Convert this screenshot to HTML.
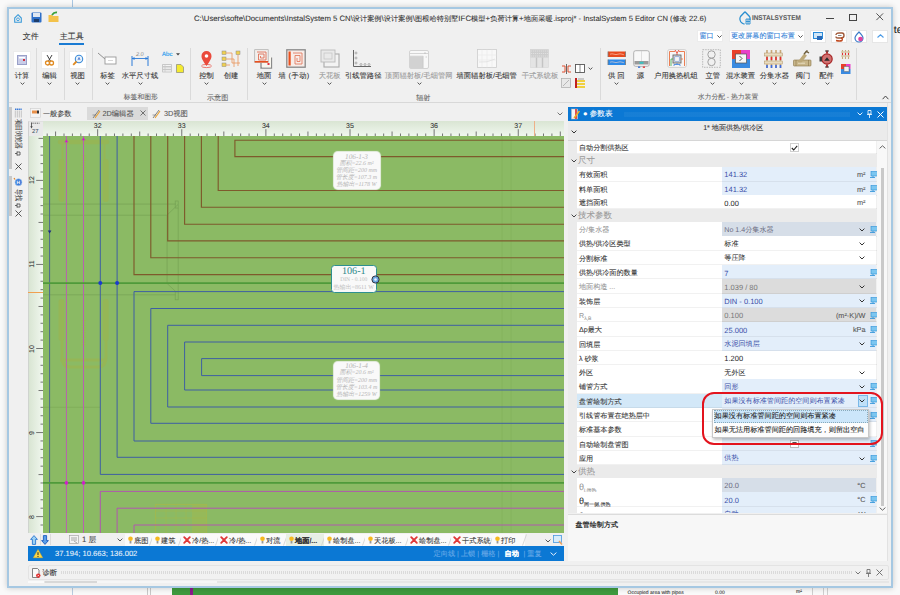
<!DOCTYPE html><html><head><meta charset="utf-8"><style>
*{box-sizing:border-box}
body{margin:0;text-rendering:geometricPrecision;width:900px;height:595px;overflow:hidden;position:relative;background:#f9f9f9;font-family:"Liberation Sans", sans-serif;color:#222}
.a{position:absolute}
.t{position:absolute;white-space:nowrap;line-height:1;-webkit-text-stroke:0.08px currentColor}
svg{position:absolute;overflow:visible}
</style></head><body>
<div class="a" style="left:72px;top:0px;width:1px;height:8px;background:#a9c7e3"></div>
<div class="t" style="left:893.8px;top:25.3px;font-size:10.5px;color:#222;">te</div>
<div class="a" style="left:72px;top:586px;width:1px;height:9px;background:#b9cce0"></div>
<div class="a" style="left:147px;top:586px;width:1px;height:9px;background:#c8c8c8"></div>
<div class="a" style="left:150px;top:586px;width:1px;height:9px;background:#c8c8c8"></div>
<div class="a" style="left:172px;top:587px;width:446px;height:8px;background:#3e9a3e"></div>
<div class="a" style="left:190px;top:587px;width:3px;height:8px;background:#8a1a8a"></div>
<div class="a" style="left:618px;top:587px;width:194px;height:8px;background:#fafafa"></div>
<div class="t" style="left:627.5px;top:591px;font-size:5px;color:#333;">Occupied area with pipes</div>
<div class="t" style="left:715px;top:591px;font-size:5px;color:#333;">0.00</div>
<div class="t" style="left:796px;top:590px;font-size:5px;color:#333;">m²</div>
<div class="a" style="left:812px;top:586px;width:1px;height:9px;background:#cfcfcf"></div>
<div class="a" style="left:823px;top:586px;width:1px;height:9px;background:#cfcfcf"></div>
<div class="a" style="left:827px;top:586px;width:1px;height:9px;background:#cfcfcf"></div>
<div class="a" style="left:7px;top:7px;width:886px;height:581px;background:#f0f0f0;border:2px solid #a6c8e2;box-shadow:0 0 6px rgba(0,0,0,0.2)"></div>
<svg style="left:14px;top:13.5px" width="8" height="9" viewBox="0 0 8 9">
<path d="M4 0.7 L7.3 4 V8.3 H0.7 V4 Z" fill="none" stroke="#3a9ad9" stroke-width="1.1"/>
<circle cx="4" cy="5.3" r="1.4" fill="none" stroke="#3a9ad9" stroke-width="0.9"/></svg>
<svg style="left:31px;top:12px" width="11" height="11" viewBox="0 0 11 11">
<rect x="0.5" y="0.5" width="10" height="10" rx="1" fill="#2e6fc8"/>
<rect x="2" y="1" width="7" height="4" fill="#dfe7f2"/><rect x="3" y="7" width="5" height="3" fill="#1d3d6a"/></svg>
<svg style="left:48px;top:11px" width="11" height="12" viewBox="0 0 11 12">
<path d="M0.5 4 L4 4 L5 5 L10.5 5 L10.5 11 L0.5 11 Z" fill="#f3c24a"/>
<path d="M4 4 Q6 1 9 1.5" stroke="#3aa03a" stroke-width="1.8" fill="none"/></svg>
<div class="t" style="left:193.9px;top:15px;font-size:7.75px;color:#333;">C:\Users\softe\Documents\InstalSystem 5 CN\</div>
<div class="t" style="left:352.7px;top:15px;font-size:7.75px;color:#333;letter-spacing:0.085px"><span style="font-size:7.15px">设计案例</span>\<span style="font-size:7.15px">设计案例</span>\<span style="font-size:7.15px">图根哈特别墅</span>IFC<span style="font-size:7.15px">模型</span>+<span style="font-size:7.15px">负荷计算</span>+<span style="font-size:7.15px">地面采暖</span></div>
<div class="t" style="left:553.2px;top:15px;font-size:7.6px;color:#333;">.isproj* - InstalSystem 5 Editor CN (<span style="font-size:7.15px">修改</span> 22.6)</div>
<svg style="left:739px;top:11px" width="12" height="14" viewBox="0 0 12 14">
<path d="M6 0.8 L10.5 5.5 C11.2 6.5 11.2 8 11 9 M6 0.8 L1.5 5.5 C0.5 7 0.6 10.5 3 12 C4 12.8 5 13 5.5 13" fill="none" stroke="#2a8fd0" stroke-width="1.3"/>
<path d="M7 8 H11 V13 H7 Z M9 8 V13 M7 10.5 H11" fill="none" stroke="#2a8fd0" stroke-width="0.9"/></svg>
<div class="t" style="left:752.3px;top:15.2px;font-size:7.0px;color:#5a5a5a;font-weight:bold;transform-origin:0 0;transform:scaleX(0.91)">INSTALSYSTEM</div>
<div class="a" style="left:826px;top:17.5px;width:7.5px;height:1px;background:#444"></div>
<div class="a" style="left:849px;top:13.5px;width:7.5px;height:7.5px;border:1px solid #444"></div>
<svg style="left:875.5px;top:13px" width="7.5" height="7.5" viewBox="0 0 7.5 7.5"><path d="M0.4 0.4 L7.1 7.1 M7.1 0.4 L0.4 7.1" stroke="#444" stroke-width="0.9"/></svg>
<div class="t" style="left:22.7px;top:32.8px;font-size:8.0px;color:#333;">文件</div>
<div class="t" style="left:59.8px;top:33px;font-size:8.0px;color:#333;">主工具</div>
<div class="a" style="left:59px;top:43px;width:25px;height:2.4px;background:#1a7bd3"></div>
<div class="a" style="left:697px;top:29.8px;width:26.2px;height:12.4px;background:#fff;border:1px solid #ececec"></div>
<div class="t" style="left:699.5px;top:32.8px;font-size:7.1px;color:#2f7ed6;">窗口</div>
<svg style="left:716.5px;top:35.3px" width="5" height="3" viewBox="0 0 5 3"><path d="M0.4 0.4 L2.5 2.5 L4.6 0.4" stroke="#555" fill="none" stroke-width="1"/></svg>
<div class="a" style="left:728.5px;top:29.8px;width:76.7px;height:12.4px;background:#fff;border:1px solid #ececec"></div>
<div class="t" style="left:731px;top:32.8px;font-size:7.1px;color:#2f7ed6;">更改屏幕的窗口布置</div>
<svg style="left:798px;top:35.3px" width="5" height="3" viewBox="0 0 5 3"><path d="M0.4 0.4 L2.5 2.5 L4.6 0.4" stroke="#555" fill="none" stroke-width="1"/></svg>
<div class="a" style="left:810px;top:30px;width:16px;height:12.5px;background:#fff;border:1px solid #e6e6e6"></div>
<div class="a" style="left:831px;top:30px;width:16px;height:12.5px;background:#fff;border:1px solid #e6e6e6"></div>
<div class="a" style="left:851px;top:30px;width:16px;height:12.5px;background:#fff;border:1px solid #e6e6e6"></div>
<div class="a" style="left:872px;top:30px;width:16px;height:12.5px;background:#fff;border:1px solid #e6e6e6"></div>
<svg style="left:813px;top:32px" width="10" height="9" viewBox="0 0 10 9"><rect x="0.5" y="0.5" width="9" height="6" fill="#cfe6f8" stroke="#2a8ad8"/><rect x="4" y="4" width="5" height="4" fill="#2a6ab8"/></svg>
<svg style="left:833.5px;top:31.5px" width="11" height="10" viewBox="0 0 11 10"><path d="M2 3 Q2 1 5 1 H8 Q10 1 10 3.5 Q10 6 7 6 H4 Q2 6 2 4.5" stroke="#a05a3a" stroke-width="1.4" fill="none"/><path d="M4 3.5 H7.5" stroke="#888" stroke-width="1"/><path d="M7 6 Q9 6.5 8 8.5 Q6 9.5 2 8.5" stroke="#c04a20" stroke-width="1.4" fill="none"/></svg>
<svg style="left:854px;top:31px" width="10" height="11" viewBox="0 0 10 11"><path d="M5 1 C3 3 1 5 1 7 A4 4 0 0 0 9 7 C9 5 7 3 5 1 Z" fill="none" stroke="#3a7ac8" stroke-width="1.2"/><circle cx="6.5" cy="8" r="2.3" fill="#e040a0"/></svg>
<svg style="left:876.5px;top:34px" width="7" height="4" viewBox="0 0 7 4"><path d="M0.5 3.5 L3.5 0.8 L6.5 3.5" stroke="#4a9ae6" fill="none" stroke-width="1.1"/></svg>
<div class="a" style="left:35.6px;top:48px;width:1px;height:52px;background:#dadada"></div>
<div class="a" style="left:63.6px;top:48px;width:1px;height:52px;background:#dadada"></div>
<div class="a" style="left:91.6px;top:48px;width:1px;height:52px;background:#dadada"></div>
<div class="a" style="left:190.4px;top:48px;width:1px;height:52px;background:#dadada"></div>
<div class="a" style="left:247.3px;top:48px;width:1px;height:52px;background:#dadada"></div>
<div class="a" style="left:600px;top:48px;width:1px;height:52px;background:#dadada"></div>
<div class="a" style="left:856.4px;top:48px;width:1px;height:52px;background:#dadada"></div>
<div class="a" style="left:9px;top:102px;width:882px;height:1px;background:#d8d8d8"></div>
<div class="a" style="left:13px;top:51px;width:18px;height:17.5px;background:#fff;border:1px solid #ececec"></div>
<div class="t" style="left:-38px;width:120px;text-align:center;top:72px;font-size:7.3px;color:#333">计算</div>
<svg style="left:19.5px;top:82.0px" width="5" height="3" viewBox="0 0 5 3"><path d="M0.6 0.6 L2.5 2.4 L4.4 0.6" stroke="#444" fill="none" stroke-width="0.9"/></svg>
<div class="a" style="left:41px;top:51px;width:18px;height:17.5px;background:#fff;border:1px solid #ececec"></div>
<div class="t" style="left:-10.5px;width:120px;text-align:center;top:72px;font-size:7.3px;color:#333">编辑</div>
<svg style="left:47.0px;top:82.0px" width="5" height="3" viewBox="0 0 5 3"><path d="M0.6 0.6 L2.5 2.4 L4.4 0.6" stroke="#444" fill="none" stroke-width="0.9"/></svg>
<div class="a" style="left:69px;top:51px;width:18px;height:17.5px;background:#fff;border:1px solid #ececec"></div>
<div class="t" style="left:17.5px;width:120px;text-align:center;top:72px;font-size:7.3px;color:#333">视图</div>
<svg style="left:75.0px;top:82.0px" width="5" height="3" viewBox="0 0 5 3"><path d="M0.6 0.6 L2.5 2.4 L4.4 0.6" stroke="#444" fill="none" stroke-width="0.9"/></svg>
<svg style="left:17px;top:55px" width="10" height="10" viewBox="0 0 10 10"><rect x="0.5" y="0.5" width="9" height="9" fill="#c9cde8" stroke="#9aa0c8"/><rect x="2" y="2" width="6" height="1.5" fill="#fff"/><rect x="6" y="4" width="2" height="2" fill="#d03040"/></svg>
<svg style="left:44px;top:54px" width="11" height="12" viewBox="0 0 11 12"><path d="M3 1 L6.5 7 M8 1 L4.5 7" stroke="#444" stroke-width="1"/><circle cx="3.5" cy="9" r="2" fill="none" stroke="#e08a20" stroke-width="1.3"/><circle cx="7.5" cy="9" r="2" fill="none" stroke="#e08a20" stroke-width="1.3"/></svg>
<svg style="left:72px;top:54px" width="12" height="12" viewBox="0 0 12 12"><circle cx="7" cy="5" r="3.7" fill="#e8f2fb" stroke="#3a8ad8" stroke-width="1.1"/><path d="M4.5 7.5 L1.2 10.8" stroke="#e08a20" stroke-width="1.8"/><path d="M6 6 L7 3.5 L8 6" stroke="#3a6ac8" fill="none" stroke-width="0.8"/></svg>
<svg style="left:97px;top:52px" width="20" height="14" viewBox="0 0 20 14"><path d="M1 1 L8 7" stroke="#777" stroke-width="0.8"/><rect x="8" y="5" width="11" height="7" fill="#fff" stroke="#999" stroke-width="0.9"/><path d="M11 8.5 L16 8.5" stroke="#bbb" stroke-width="0.6"/></svg>
<div class="t" style="left:47.599999999999994px;width:120px;text-align:center;top:72px;font-size:7.3px;color:#333">标签</div>
<svg style="left:105.1px;top:82.0px" width="5" height="3" viewBox="0 0 5 3"><path d="M0.6 0.6 L2.5 2.4 L4.4 0.6" stroke="#444" fill="none" stroke-width="0.9"/></svg>
<svg style="left:130px;top:50px" width="20" height="17" viewBox="0 0 20 17"><text x="6" y="5.5" font-size="5.5" font-style="italic" fill="#888" font-family="Liberation Sans">2.0</text><path d="M2 6 L2 16 M18 6 L18 16" stroke="#2a7ad8" stroke-width="1"/><path d="M2 8.5 L18 8.5" stroke="#2a7ad8" stroke-width="0.9"/><path d="M2 8.5 L4.5 7 L4.5 10 Z M18 8.5 L15.5 7 L15.5 10 Z" fill="#2a7ad8"/></svg>
<div class="t" style="left:80px;width:120px;text-align:center;top:72px;font-size:7.3px;color:#333">水平尺寸线</div>
<svg style="left:137.5px;top:82.0px" width="5" height="3" viewBox="0 0 5 3"><path d="M0.6 0.6 L2.5 2.4 L4.4 0.6" stroke="#444" fill="none" stroke-width="0.9"/></svg>
<div class="t" style="left:161.8px;top:52px;font-size:6.2px;color:#48a8ee;font-weight:bold;letter-spacing:-0.4px;-webkit-text-stroke:0">Abc</div>
<svg style="left:175.8px;top:53px" width="4" height="3" viewBox="0 0 4 3"><path d="M0 0.3 H4 L2 2.6 Z" fill="#444"/></svg>
<svg style="left:161.5px;top:64px" width="10" height="8.5" viewBox="0 0 10 8.5"><rect x="0" y="0" width="10" height="8.5" rx="0.8" fill="#c8c8c8"/><path d="M1 1.5 H9 M1 4.2 H9 M1 6.9 H9" stroke="#f4f4f4" stroke-width="1.2"/><path d="M3 1 V8" stroke="#c8c8c8" stroke-width="0.7"/></svg>
<svg style="left:175.5px;top:63.5px" width="8" height="9" viewBox="0 0 8 9"><path d="M0.5 0.5 H5 L7.5 3 V8.5 H0.5 Z" fill="#f4ea30" stroke="#777" stroke-width="0.6"/></svg>
<div class="t" style="left:123.8px;top:95px;font-size:6.8px;color:#666;">标签和图形</div>
<svg style="left:200px;top:50px" width="13" height="18" viewBox="0 0 13 18"><ellipse cx="6.5" cy="16" rx="5" ry="1.6" fill="none" stroke="#e85a50" stroke-width="0.8"/><path d="M6.5 16 C3 11 1.5 8.5 1.5 6 A5 5 0 0 1 11.5 6 C11.5 8.5 10 11 6.5 16 Z" fill="#ea4a3c"/><circle cx="6.5" cy="6" r="1.8" fill="#fff"/></svg>
<div class="t" style="left:146.5px;width:120px;text-align:center;top:72px;font-size:7.3px;color:#333">控制</div>
<svg style="left:204.0px;top:82.0px" width="5" height="3" viewBox="0 0 5 3"><path d="M0.6 0.6 L2.5 2.4 L4.4 0.6" stroke="#444" fill="none" stroke-width="0.9"/></svg>
<svg style="left:221px;top:50px" width="20" height="18" viewBox="0 0 20 18"><rect x="1" y="1" width="4" height="3.5" fill="#f0d050" stroke="#888" stroke-width="0.5"/><rect x="1" y="7" width="4" height="3.5" fill="#f0d050" stroke="#888" stroke-width="0.5"/><rect x="1" y="13" width="4" height="3.5" fill="#f0d050" stroke="#888" stroke-width="0.5"/><rect x="15" y="1" width="4" height="3.5" fill="#f0d050" stroke="#888" stroke-width="0.5"/><path d="M5 3 H11 V13 M5 9 H13 V17 M5 15 H9 M17 4.5 V16 M11 13 H19" stroke="#e8945a" stroke-width="0.8" fill="none"/></svg>
<div class="t" style="left:171px;width:120px;text-align:center;top:72px;font-size:7.3px;color:#333">创建</div>
<div class="t" style="left:207px;top:95px;font-size:7.1px;color:#666;">示意图</div>
<svg style="left:254px;top:48.5px" width="20" height="20" viewBox="0 0 20 20"><path d="M7 6 H11.5 V8 M17.5 8.5 V19 H7 V14" stroke="#8a8a8a" stroke-width="1.3" fill="none"/><rect x="8" y="8" width="9" height="10.5" fill="#f8f6ee"/><rect x="13.5" y="14" width="2" height="2" fill="#e03040"/><rect x="0.7" y="0.7" width="13.5" height="12.5" fill="#f3efec" stroke="#aaa" stroke-width="0.7"/><path d="M3 3 H12 V11 H4.5 V5 H10 V9 H6.5 V7" stroke="#e07058" stroke-width="0.9" fill="none"/><rect x="0.7" y="12" width="13.5" height="1.6" fill="#e8501e"/></svg>
<div class="t" style="left:204px;width:120px;text-align:center;top:72px;font-size:7.3px;color:#333">地面</div>
<svg style="left:261.5px;top:82.0px" width="5" height="3" viewBox="0 0 5 3"><path d="M0.6 0.6 L2.5 2.4 L4.4 0.6" stroke="#444" fill="none" stroke-width="0.9"/></svg>
<svg style="left:286px;top:49px" width="20" height="19" viewBox="0 0 20 19"><rect x="0.8" y="0.8" width="18.4" height="17.4" fill="#f7ece8" stroke="#888" stroke-width="1.3"/><rect x="2.5" y="2.5" width="2.2" height="14" fill="#e8501e"/><path d="M7 4 H16 V15 H9 V6.5 H14 V12.5 H11 V9" stroke="#e07050" stroke-width="0.8" fill="none"/></svg>
<div class="t" style="left:278.5px;top:72px;font-size:7.3px;color:#333;letter-spacing:0.4px">墙 (手动)</div>
<svg style="left:319.5px;top:49px" width="20" height="19" viewBox="0 0 20 19"><rect x="4" y="5" width="15" height="13" fill="#f3f3f3" stroke="#aaa" stroke-width="1.1"/><rect x="1" y="1" width="14" height="12" fill="#e9e9e9" stroke="#bbb" stroke-width="0.9"/><rect x="4" y="4" width="8" height="6" fill="none" stroke="#c3c3c3" stroke-width="0.7"/></svg>
<div class="t" style="left:269.7px;width:120px;text-align:center;top:72px;font-size:7.3px;color:#999">天花板</div>
<svg style="left:327.2px;top:82.0px" width="5" height="3" viewBox="0 0 5 3"><path d="M0.6 0.6 L2.5 2.4 L4.4 0.6" stroke="#444" fill="none" stroke-width="0.9"/></svg>
<svg style="left:352px;top:49px" width="20" height="19" viewBox="0 0 20 19"><path d="M1.5 1 V17.5 H19" stroke="#666" stroke-width="1" fill="none"/><circle cx="4" cy="4" r="1" fill="none" stroke="#888" stroke-width="0.6"/><circle cx="4" cy="9" r="1" fill="none" stroke="#888" stroke-width="0.6"/><circle cx="4" cy="14" r="1" fill="none" stroke="#888" stroke-width="0.6"/><circle cx="9" cy="15.5" r="1" fill="none" stroke="#888" stroke-width="0.6"/><circle cx="13" cy="15.5" r="1" fill="none" stroke="#888" stroke-width="0.6"/><circle cx="17" cy="15.5" r="1" fill="none" stroke="#888" stroke-width="0.6"/></svg>
<div class="t" style="left:303.2px;width:120px;text-align:center;top:72px;font-size:7.3px;color:#333">引线管路径</div>
<svg style="left:409px;top:49.5px" width="20" height="19" viewBox="0 0 20 19"><rect x="0.5" y="0.5" width="19" height="18" rx="1.5" fill="#f8f8f8" stroke="#cfcfcf" stroke-width="0.9"/><rect x="1" y="6.5" width="13" height="11.5" fill="#d2d2d2"/><path d="M1 6.2 H14.2 V18 M1 3.5 H19" stroke="#bdbdbd" stroke-width="0.6" fill="none"/><path d="M16 2 V4 M16.5 7 H18" stroke="#aaa" stroke-width="0.5"/></svg>
<div class="t" style="left:358.7px;width:120px;text-align:center;top:72px;font-size:7.3px;color:#999">顶面辐射板/毛细管网</div>
<svg style="left:416.5px;top:82.0px" width="5" height="3" viewBox="0 0 5 3"><path d="M0.6 0.6 L2.5 2.4 L4.4 0.6" stroke="#444" fill="none" stroke-width="0.9"/></svg>
<div class="t" style="left:416.2px;top:95px;font-size:7.1px;color:#666;">辐射</div>
<svg style="left:477px;top:49px" width="20" height="19" viewBox="0 0 20 19"><rect x="0.5" y="0.5" width="19" height="18" fill="#f8f8f8" stroke="#ccc" stroke-width="0.8"/><path d="M0.5 6 H19.5 M0.5 11 H19.5 M5 0.5 V18.5 M10 0.5 V18.5 M15 0.5 V18.5" stroke="#e6e6e6" stroke-width="0.5"/><path d="M2 13 Q10 14 18 10" stroke="#ddd" stroke-width="0.7" fill="none"/></svg>
<div class="t" style="left:426.7px;width:120px;text-align:center;top:72px;font-size:7.3px;color:#333">墙面辐射板/毛细管</div>
<svg style="left:530px;top:49px" width="19" height="19" viewBox="0 0 19 19"><rect x="0.5" y="0.5" width="18" height="18" fill="#e4e4e4" stroke="#d6d6d6" stroke-width="0.6"/><rect x="0.5" y="0.5" width="18" height="8" fill="#cdcdcd"/><path d="M1 2 H18 M1 4.5 H18 M1 7 H18" stroke="#e6e6e6" stroke-width="0.7" stroke-dasharray="1.2 0.8"/><path d="M6.5 8.5 V18.5 M12.5 8.5 V18.5" stroke="#c4c4c4" stroke-width="1.4"/></svg>
<div class="t" style="left:480px;width:120px;text-align:center;top:72px;font-size:7.3px;color:#999">干式系统板</div>
<svg style="left:561px;top:63.5px" width="11" height="10" viewBox="0 0 11 10"><path d="M5.5 0 V10" stroke="#444" stroke-width="0.8"/><path d="M1 2 H4 V8 H1 M10 2 H7 V8 H10" stroke="#e05030" stroke-width="1" fill="none"/></svg>
<svg style="left:574.5px;top:64px" width="10" height="9" viewBox="0 0 10 9"><rect x="0.5" y="0.5" width="9" height="8" fill="#fff" stroke="#555" stroke-width="0.9"/><path d="M5 0.5 V8.5" stroke="#555" stroke-width="0.7"/></svg>
<svg style="left:588.2px;top:66.8px" width="5" height="3" viewBox="0 0 5 3"><path d="M0.6 0.6 L2.5 2.4 L4.4 0.6" stroke="#444" fill="none" stroke-width="0.9"/></svg>
<svg style="left:561px;top:78px" width="10" height="10" viewBox="0 0 10 10"><rect x="0.5" y="0.5" width="9" height="9" fill="#e8e8e8" stroke="#aaa" stroke-width="0.7"/><path d="M2 8 L8 2" stroke="#aaa" stroke-width="0.8"/></svg>
<svg style="left:574.5px;top:77.5px" width="10" height="10" viewBox="0 0 10 10"><rect x="0" y="0" width="2" height="10" fill="#c02020"/><rect x="2" y="2" width="8" height="2" fill="#f0d040"/><rect x="2" y="5" width="8" height="2" fill="#f0d040"/><rect x="2" y="8" width="8" height="2" fill="#f0d040"/><path d="M3 1 H9" stroke="#555" stroke-width="0.5"/></svg>
<svg style="left:607.5px;top:51px" width="18" height="16" viewBox="0 0 18 16"><rect x="0" y="0.5" width="17.5" height="5.5" fill="#e84a1e"/><rect x="0" y="8.5" width="17.5" height="5.5" fill="#2e8ae8"/><path d="M2 3.2 Q4 2.4 6 3.2 T10 3.2 T14 3.2 T16 3.2 M2 11.2 Q4 10.4 6 11.2 T10 11.2 T14 11.2 T16 11.2" stroke="#ffd8c8" stroke-width="0.6" fill="none"/><path d="M0 0.5 V6 M17.5 0.5 V6 M0 8.5 V14 M17.5 8.5 V14" stroke="#777" stroke-width="0.8"/></svg>
<div class="t" style="left:608px;top:72px;font-size:7.3px;color:#333;">供 回</div>
<svg style="left:613.5px;top:82.0px" width="5" height="3" viewBox="0 0 5 3"><path d="M0.6 0.6 L2.5 2.4 L4.4 0.6" stroke="#444" fill="none" stroke-width="0.9"/></svg>
<svg style="left:632.5px;top:49.5px" width="17" height="18" viewBox="0 0 17 18"><rect x="0.7" y="0.7" width="15.6" height="15.6" rx="2" fill="#f8f8f8" stroke="#aaa" stroke-width="0.9"/><path d="M8.5 1 V11" stroke="#ccc" stroke-width="0.6"/><rect x="1.5" y="11" width="14" height="3.5" fill="#9a9a9a"/><rect x="6.5" y="11.8" width="4" height="2" fill="#3ac0c0"/><rect x="5" y="16.5" width="2.2" height="1.3" fill="#2a6ad8"/><rect x="9.8" y="16.5" width="2.2" height="1.3" fill="#e02a2a"/></svg>
<div class="t" style="left:580.5px;width:120px;text-align:center;top:72px;font-size:7.3px;color:#333">源</div>
<svg style="left:666.5px;top:49px" width="20" height="19" viewBox="0 0 20 19"><rect x="0.6" y="0.6" width="18.8" height="17.8" rx="2" fill="#f6f6f6" stroke="#c8c8c8" stroke-width="0.8"/><path d="M2.5 17 V2.5 H8 M17.5 17 V2.5 H12" stroke="#e8602a" stroke-width="0.8" fill="none"/><path d="M8 1 L10 4 L12 1 M10 4 V6" stroke="#e8402a" stroke-width="0.9" fill="none"/><rect x="6" y="6" width="8" height="8" fill="#d8d8d8" stroke="#666" stroke-width="0.9"/><rect x="7.8" y="7.8" width="4.4" height="4.4" fill="#f4f4f4" stroke="#5a8ad8" stroke-width="0.5"/><path d="M4 17 V10 H6" stroke="#38a848" stroke-width="0.8" fill="none"/><path d="M10 14 V15.5 M7 17 V15.5 H13 V17" stroke="#3a80e0" stroke-width="0.8" fill="none"/><path d="M14 10 H16" stroke="#e8602a" stroke-width="0.7"/></svg>
<div class="t" style="left:616px;width:120px;text-align:center;top:72px;font-size:7.3px;color:#333">户用换热机组</div>
<svg style="left:702px;top:49px" width="19" height="19" viewBox="0 0 19 19"><rect x="0.7" y="0.7" width="17.6" height="17.6" fill="none" stroke="#aaa" stroke-width="0.8" stroke-dasharray="1.5 1"/><circle cx="9.5" cy="5.5" r="3.7" fill="none" stroke="#999" stroke-width="0.9"/><circle cx="9.5" cy="13" r="3.7" fill="none" stroke="#999" stroke-width="0.9"/></svg>
<div class="t" style="left:652.7px;width:120px;text-align:center;top:72px;font-size:7.3px;color:#333">立管</div>
<svg style="left:710.0px;top:82.0px" width="5" height="3" viewBox="0 0 5 3"><path d="M0.6 0.6 L2.5 2.4 L4.4 0.6" stroke="#444" fill="none" stroke-width="0.9"/></svg>
<svg style="left:732px;top:49.5px" width="18" height="18" viewBox="0 0 18 18"><rect x="0" y="0" width="9" height="9" fill="#e8402a"/><rect x="9" y="0" width="9" height="9" fill="#e840c8"/><rect x="0" y="9" width="18" height="9" fill="#3a8ae0"/><rect x="3.5" y="4" width="11" height="9" fill="#f6f6f6" stroke="#555" stroke-width="0.7"/><path d="M7.5 6 L10 8.5 L7.5 11" stroke="#444" fill="none" stroke-width="0.9"/></svg>
<div class="t" style="left:680.5px;width:120px;text-align:center;top:72px;font-size:7.3px;color:#333">混水装置</div>
<svg style="left:738.5px;top:82.0px" width="5" height="3" viewBox="0 0 5 3"><path d="M0.6 0.6 L2.5 2.4 L4.4 0.6" stroke="#444" fill="none" stroke-width="0.9"/></svg>
<svg style="left:764px;top:49.5px" width="19" height="18" viewBox="0 0 19 18"><path d="M3 0 V18 M7.5 0 V18 M12 0 V18 M16.5 0 V18" stroke="#c8a878" stroke-width="1.6"/><rect x="0.5" y="3" width="18" height="3" fill="#e8dcc0" stroke="#b09060" stroke-width="0.5"/><rect x="0.5" y="11" width="18" height="3" fill="#e8dcc0" stroke="#b09060" stroke-width="0.5"/><path d="M3 7 V10 M7.5 7 V10 M12 7 V10 M16.5 7 V10" stroke="#e03030" stroke-width="1.6"/><path d="M3 15 V18 M7.5 15 V18 M12 15 V18 M16.5 15 V18" stroke="#3a6ae0" stroke-width="1.6"/></svg>
<div class="t" style="left:714.4px;width:120px;text-align:center;top:72px;font-size:7.3px;color:#333">分集水器</div>
<svg style="left:771.5px;top:82.0px" width="5" height="3" viewBox="0 0 5 3"><path d="M0.6 0.6 L2.5 2.4 L4.4 0.6" stroke="#444" fill="none" stroke-width="0.9"/></svg>
<div class="t" style="left:697.8px;top:95px;font-size:6.8px;color:#666;">水力分配 - 热力装置</div>
<svg style="left:793px;top:50px" width="19" height="17" viewBox="0 0 19 17"><rect x="0.5" y="10" width="17.5" height="6" rx="0.8" fill="#c8b68a" stroke="#8a7648" stroke-width="0.6"/><path d="M3 10 V16 M15.5 10 V16" stroke="#8a7648" stroke-width="0.6"/><path d="M6 13 L12.5 4.5" stroke="#bca878" stroke-width="3.6"/><path d="M5 13.2 H12" stroke="#f0e8d0" stroke-width="0.8"/><path d="M11 4 L13.5 1.5 L16 3 M12.5 2 L14.5 0.5" stroke="#6a5a38" stroke-width="1.4" fill="none"/></svg>
<div class="t" style="left:743px;width:120px;text-align:center;top:72px;font-size:7.3px;color:#333">阀门</div>
<svg style="left:800.5px;top:82.0px" width="5" height="3" viewBox="0 0 5 3"><path d="M0.6 0.6 L2.5 2.4 L4.4 0.6" stroke="#444" fill="none" stroke-width="0.9"/></svg>
<svg style="left:819px;top:50px" width="15" height="18" viewBox="0 0 15 18"><path d="M8 0.5 V3.5 M8 14.5 V17.5" stroke="#a82020" stroke-width="1.8"/><path d="M6 1 H10 M6 17 H10" stroke="#444" stroke-width="1"/><circle cx="8" cy="9" r="5.2" fill="#d07070" stroke="#a82828" stroke-width="1.2"/><path d="M0.5 6.5 H3 V11.5 H0.5 Z" fill="#3a3a3a"/><path d="M5.2 10.8 L8 7.2 L10.8 10.8 Z" fill="#2a2a2a"/></svg>
<div class="t" style="left:766.5px;width:120px;text-align:center;top:72px;font-size:7.3px;color:#333">配件</div>
<svg style="left:824.5px;top:82.0px" width="5" height="3" viewBox="0 0 5 3"><path d="M0.6 0.6 L2.5 2.4 L4.4 0.6" stroke="#444" fill="none" stroke-width="0.9"/></svg>
<svg style="left:840.5px;top:49.5px" width="9" height="9" viewBox="0 0 9 9"><path d="M1.5 0 V9 M4.5 0 V9 M7.5 0 V9" stroke="#c8a878" stroke-width="1.1"/><path d="M0 2 H9 M0 6 H9" stroke="#d8c8a8" stroke-width="1.4"/><path d="M1.5 3 V5 M4.5 3 V5 M7.5 3 V5" stroke="#e03030" stroke-width="1.1"/></svg>
<svg style="left:840.5px;top:63.5px" width="9.5" height="10" viewBox="0 0 9.5 10"><rect x="0" y="0" width="5" height="5" fill="#e8402a"/><rect x="5" y="0" width="4.5" height="5" fill="#e840c8"/><rect x="0" y="5" width="9.5" height="5" fill="#3a8ae0"/><rect x="3" y="2.5" width="5" height="5" fill="#f3f3f3" stroke="#666" stroke-width="0.5"/></svg>
<svg style="left:881.5px;top:95px" width="7" height="5" viewBox="0 0 7 5"><path d="M0.6 4.2 L3.5 1 L6.4 4.2" stroke="#444" fill="none" stroke-width="1"/></svg>
<div class="a" style="left:9px;top:103px;width:18px;height:457px;background:#f0f0f0"></div>
<div class="a" style="left:9px;top:106.5px;width:2.5px;height:62.5px;background:#c8c8c8"></div>
<div class="a" style="left:9px;top:175.5px;width:2.5px;height:40.5px;background:#c8c8c8"></div>
<svg style="left:13.5px;top:107.5px" width="9" height="10" viewBox="0 0 9 10"><path d="M1 1.2 H8" stroke="#3a7ad8" stroke-width="1.4" stroke-dasharray="1.3 0.5"/><path d="M1.3 2.5 V9.5 M3.3 2.5 V9.5 M5.3 2.5 V9.5 M7.3 2.5 V9.5" stroke="#999" stroke-width="0.5"/></svg>
<div class="t" style="left:22.3px;top:119px;font-size:7.8px;color:#444;transform-origin:0 0;transform:rotate(90deg) scaleX(0.76)">项目浏览器</div>
<svg style="left:14.5px;top:151px" width="6" height="5" viewBox="0 0 6 5"><path d="M0 2.5 H2 M2 0.5 V4.5 M2 1 H5 V4 H2" stroke="#444" stroke-width="0.8" fill="none"/></svg>
<svg style="left:14.5px;top:162.5px" width="7" height="7" viewBox="0 0 7 7"><path d="M0.5 0.5 L6.5 6.5 M6.5 0.5 L0.5 6.5" stroke="#444" stroke-width="0.9"/></svg>
<svg style="left:13.8px;top:177.5px" width="9" height="8" viewBox="0 0 9 8"><circle cx="4.5" cy="4.2" r="3.5" fill="#3a7ad8" stroke="#a8c8f0" stroke-width="0.6"/><path d="M1 1.5 L0 0" stroke="#e08020" stroke-width="1.2"/><text x="2.6" y="6.2" font-size="4.8" fill="#fff" font-family="Liberation Sans" font-weight="bold">H</text></svg>
<div class="t" style="left:22.3px;top:188.7px;font-size:7.8px;color:#444;transform-origin:0 0;transform:rotate(90deg) scaleX(0.78)">导找</div>
<svg style="left:14.5px;top:202.8px" width="6" height="5" viewBox="0 0 6 5"><path d="M0 2.5 H2 M2 0.5 V4.5 M2 1 H5 V4 H2" stroke="#444" stroke-width="0.8" fill="none"/></svg>
<svg style="left:14.5px;top:209.5px" width="7" height="7" viewBox="0 0 7 7"><path d="M0.5 0.5 L6.5 6.5 M6.5 0.5 L0.5 6.5" stroke="#444" stroke-width="0.9"/></svg>
<svg style="left:30px;top:108px" width="11" height="10" viewBox="0 0 11 10"><rect x="0.5" y="0.5" width="10" height="9" fill="#f4f4f4" stroke="#ccc" stroke-width="0.6"/><path d="M2 4 H7" stroke="#e8904a" stroke-width="3"/><rect x="7" y="2.5" width="2" height="3" fill="#333"/></svg>
<div class="t" style="left:43px;top:110.5px;font-size:7.1px;color:#444;">一般参数</div>
<div class="a" style="left:86.8px;top:107px;width:61.6px;height:13px;background:#dadada"></div>
<svg style="left:91.5px;top:108.5px" width="9" height="10" viewBox="0 0 9 10"><path d="M1 9 L7 1" stroke="#777" stroke-width="0.9"/><path d="M3 9 L8 2" stroke="#e8a030" stroke-width="1.1"/><path d="M0.5 6 H4" stroke="#555" stroke-width="0.5"/></svg>
<div class="t" style="left:102.5px;top:110.3px;font-size:7.3px;color:#555;">2D编辑器</div>
<svg style="left:140px;top:110px" width="6" height="6" viewBox="0 0 6 6"><path d="M0.5 0.5 L5.5 5.5 M5.5 0.5 L0.5 5.5" stroke="#555" stroke-width="0.8"/></svg>
<svg style="left:152px;top:108.5px" width="9" height="10" viewBox="0 0 9 10"><path d="M1 9 L7 1" stroke="#777" stroke-width="0.9"/><path d="M3 9 L8 2" stroke="#e8a030" stroke-width="1.1"/><path d="M0.5 6 H4" stroke="#555" stroke-width="0.5"/></svg>
<div class="t" style="left:164px;top:110.3px;font-size:7.3px;color:#555;">3D视图</div>
<svg style="left:556.5px;top:111.5px" width="6" height="4" viewBox="0 0 6 4"><path d="M0.6 0.6 L3 3 L5.4 0.6" stroke="#666" fill="none" stroke-width="0.9"/></svg>
<div class="a" style="left:27.5px;top:120.5px;width:15.5px;height:15.5px;background:#e9e9e9;border-left:1px solid #d0d0d0;border-top:1px solid #e0e0e0"></div>
<svg style="left:30px;top:122px" width="10" height="7" viewBox="0 0 10 7"><path d="M1.5 1.2 H9.5" stroke="#444" stroke-width="0.8" stroke-dasharray="1.1 0.7"/><path d="M1.5 0.5 V5" stroke="#444" stroke-width="0.8"/><path d="M0.3 4.2 L1.5 6.5 L2.7 4.2 Z" fill="#444"/></svg>
<div class="t" style="left:32px;top:129.5px;font-size:5.8px;color:#456;">27</div>
<div class="a" style="left:43px;top:120.5px;width:521px;height:15.5px;background:linear-gradient(#d9e5d3,#f0f7ee)"></div>
<div class="a" style="left:27.5px;top:136px;width:15.5px;height:397px;background:linear-gradient(90deg,#d9e5d3,#f0f7ee);border-left:1px solid #cfd4cf"></div>
<svg style="left:0;top:0" width="900" height="595"><path d="M47.18 133.5 V136" stroke="#555" stroke-width="0.8"/><path d="M55.59 131.5 V136" stroke="#555" stroke-width="0.8"/><path d="M64.00 133.5 V136" stroke="#555" stroke-width="0.8"/><path d="M72.41 133.5 V136" stroke="#555" stroke-width="0.8"/><path d="M80.83 133.5 V136" stroke="#555" stroke-width="0.8"/><path d="M89.24 133.5 V136" stroke="#555" stroke-width="0.8"/><path d="M97.65 129.2 V136" stroke="#555" stroke-width="0.8"/><path d="M106.06 133.5 V136" stroke="#555" stroke-width="0.8"/><path d="M114.47 133.5 V136" stroke="#555" stroke-width="0.8"/><path d="M122.89 133.5 V136" stroke="#555" stroke-width="0.8"/><path d="M131.30 133.5 V136" stroke="#555" stroke-width="0.8"/><path d="M139.71 131.5 V136" stroke="#555" stroke-width="0.8"/><path d="M148.12 133.5 V136" stroke="#555" stroke-width="0.8"/><path d="M156.53 133.5 V136" stroke="#555" stroke-width="0.8"/><path d="M164.95 133.5 V136" stroke="#555" stroke-width="0.8"/><path d="M173.36 133.5 V136" stroke="#555" stroke-width="0.8"/><path d="M181.77 129.2 V136" stroke="#555" stroke-width="0.8"/><path d="M190.18 133.5 V136" stroke="#555" stroke-width="0.8"/><path d="M198.59 133.5 V136" stroke="#555" stroke-width="0.8"/><path d="M207.01 133.5 V136" stroke="#555" stroke-width="0.8"/><path d="M215.42 133.5 V136" stroke="#555" stroke-width="0.8"/><path d="M223.83 131.5 V136" stroke="#555" stroke-width="0.8"/><path d="M232.24 133.5 V136" stroke="#555" stroke-width="0.8"/><path d="M240.65 133.5 V136" stroke="#555" stroke-width="0.8"/><path d="M249.07 133.5 V136" stroke="#555" stroke-width="0.8"/><path d="M257.48 133.5 V136" stroke="#555" stroke-width="0.8"/><path d="M265.89 129.2 V136" stroke="#555" stroke-width="0.8"/><path d="M274.30 133.5 V136" stroke="#555" stroke-width="0.8"/><path d="M282.71 133.5 V136" stroke="#555" stroke-width="0.8"/><path d="M291.13 133.5 V136" stroke="#555" stroke-width="0.8"/><path d="M299.54 133.5 V136" stroke="#555" stroke-width="0.8"/><path d="M307.95 131.5 V136" stroke="#555" stroke-width="0.8"/><path d="M316.36 133.5 V136" stroke="#555" stroke-width="0.8"/><path d="M324.77 133.5 V136" stroke="#555" stroke-width="0.8"/><path d="M333.19 133.5 V136" stroke="#555" stroke-width="0.8"/><path d="M341.60 133.5 V136" stroke="#555" stroke-width="0.8"/><path d="M350.01 129.2 V136" stroke="#555" stroke-width="0.8"/><path d="M358.42 133.5 V136" stroke="#555" stroke-width="0.8"/><path d="M366.83 133.5 V136" stroke="#555" stroke-width="0.8"/><path d="M375.25 133.5 V136" stroke="#555" stroke-width="0.8"/><path d="M383.66 133.5 V136" stroke="#555" stroke-width="0.8"/><path d="M392.07 131.5 V136" stroke="#555" stroke-width="0.8"/><path d="M400.48 133.5 V136" stroke="#555" stroke-width="0.8"/><path d="M408.89 133.5 V136" stroke="#555" stroke-width="0.8"/><path d="M417.31 133.5 V136" stroke="#555" stroke-width="0.8"/><path d="M425.72 133.5 V136" stroke="#555" stroke-width="0.8"/><path d="M434.13 129.2 V136" stroke="#555" stroke-width="0.8"/><path d="M442.54 133.5 V136" stroke="#555" stroke-width="0.8"/><path d="M450.95 133.5 V136" stroke="#555" stroke-width="0.8"/><path d="M459.37 133.5 V136" stroke="#555" stroke-width="0.8"/><path d="M467.78 133.5 V136" stroke="#555" stroke-width="0.8"/><path d="M476.19 131.5 V136" stroke="#555" stroke-width="0.8"/><path d="M484.60 133.5 V136" stroke="#555" stroke-width="0.8"/><path d="M493.01 133.5 V136" stroke="#555" stroke-width="0.8"/><path d="M501.43 133.5 V136" stroke="#555" stroke-width="0.8"/><path d="M509.84 133.5 V136" stroke="#555" stroke-width="0.8"/><path d="M518.25 129.2 V136" stroke="#555" stroke-width="0.8"/><path d="M526.66 133.5 V136" stroke="#555" stroke-width="0.8"/><path d="M535.07 133.5 V136" stroke="#555" stroke-width="0.8"/><path d="M543.49 133.5 V136" stroke="#555" stroke-width="0.8"/><path d="M551.90 133.5 V136" stroke="#555" stroke-width="0.8"/><path d="M560.31 131.5 V136" stroke="#555" stroke-width="0.8"/><path d="M38.5 138.38 H43" stroke="#555" stroke-width="0.8"/><path d="M40.5 146.78 H43" stroke="#555" stroke-width="0.8"/><path d="M40.5 155.19 H43" stroke="#555" stroke-width="0.8"/><path d="M40.5 163.59 H43" stroke="#555" stroke-width="0.8"/><path d="M40.5 172.00 H43" stroke="#555" stroke-width="0.8"/><path d="M36.2 180.40 H43" stroke="#555" stroke-width="0.8"/><path d="M40.5 188.81 H43" stroke="#555" stroke-width="0.8"/><path d="M40.5 197.21 H43" stroke="#555" stroke-width="0.8"/><path d="M40.5 205.62 H43" stroke="#555" stroke-width="0.8"/><path d="M40.5 214.02 H43" stroke="#555" stroke-width="0.8"/><path d="M38.5 222.43 H43" stroke="#555" stroke-width="0.8"/><path d="M40.5 230.83 H43" stroke="#555" stroke-width="0.8"/><path d="M40.5 239.24 H43" stroke="#555" stroke-width="0.8"/><path d="M40.5 247.64 H43" stroke="#555" stroke-width="0.8"/><path d="M40.5 256.05 H43" stroke="#555" stroke-width="0.8"/><path d="M36.2 264.45 H43" stroke="#555" stroke-width="0.8"/><path d="M40.5 272.86 H43" stroke="#555" stroke-width="0.8"/><path d="M40.5 281.26 H43" stroke="#555" stroke-width="0.8"/><path d="M40.5 289.66 H43" stroke="#555" stroke-width="0.8"/><path d="M40.5 298.07 H43" stroke="#555" stroke-width="0.8"/><path d="M38.5 306.48 H43" stroke="#555" stroke-width="0.8"/><path d="M40.5 314.88 H43" stroke="#555" stroke-width="0.8"/><path d="M40.5 323.28 H43" stroke="#555" stroke-width="0.8"/><path d="M40.5 331.69 H43" stroke="#555" stroke-width="0.8"/><path d="M40.5 340.10 H43" stroke="#555" stroke-width="0.8"/><path d="M36.2 348.50 H43" stroke="#555" stroke-width="0.8"/><path d="M40.5 356.90 H43" stroke="#555" stroke-width="0.8"/><path d="M40.5 365.31 H43" stroke="#555" stroke-width="0.8"/><path d="M40.5 373.72 H43" stroke="#555" stroke-width="0.8"/><path d="M40.5 382.12 H43" stroke="#555" stroke-width="0.8"/><path d="M38.5 390.52 H43" stroke="#555" stroke-width="0.8"/><path d="M40.5 398.93 H43" stroke="#555" stroke-width="0.8"/><path d="M40.5 407.34 H43" stroke="#555" stroke-width="0.8"/><path d="M40.5 415.74 H43" stroke="#555" stroke-width="0.8"/><path d="M40.5 424.14 H43" stroke="#555" stroke-width="0.8"/><path d="M36.2 432.55 H43" stroke="#555" stroke-width="0.8"/><path d="M40.5 440.95 H43" stroke="#555" stroke-width="0.8"/><path d="M40.5 449.36 H43" stroke="#555" stroke-width="0.8"/><path d="M40.5 457.76 H43" stroke="#555" stroke-width="0.8"/><path d="M40.5 466.17 H43" stroke="#555" stroke-width="0.8"/><path d="M38.5 474.58 H43" stroke="#555" stroke-width="0.8"/><path d="M40.5 482.98 H43" stroke="#555" stroke-width="0.8"/><path d="M40.5 491.38 H43" stroke="#555" stroke-width="0.8"/><path d="M40.5 499.79 H43" stroke="#555" stroke-width="0.8"/><path d="M40.5 508.19 H43" stroke="#555" stroke-width="0.8"/><path d="M36.2 516.60 H43" stroke="#555" stroke-width="0.8"/><path d="M40.5 525.00 H43" stroke="#555" stroke-width="0.8"/></svg>
<div class="t" style="left:87.65px;width:20px;text-align:center;top:122.8px;font-size:7px;color:#333">32</div>
<div class="t" style="left:171.77px;width:20px;text-align:center;top:122.8px;font-size:7px;color:#333">33</div>
<div class="t" style="left:255.89px;width:20px;text-align:center;top:122.8px;font-size:7px;color:#333">34</div>
<div class="t" style="left:340.01px;width:20px;text-align:center;top:122.8px;font-size:7px;color:#333">35</div>
<div class="t" style="left:424.13px;width:20px;text-align:center;top:122.8px;font-size:7px;color:#333">36</div>
<div class="t" style="left:508.25px;width:20px;text-align:center;top:122.8px;font-size:7px;color:#333">37</div>
<div class="t" style="left:29px;top:185.4px;width:10px;text-align:center;font-size:7px;color:#333;transform-origin:0 0;transform:rotate(-90deg)">12</div>
<div class="t" style="left:29px;top:269.45px;width:10px;text-align:center;font-size:7px;color:#333;transform-origin:0 0;transform:rotate(-90deg)">11</div>
<div class="t" style="left:29px;top:353.5px;width:10px;text-align:center;font-size:7px;color:#333;transform-origin:0 0;transform:rotate(-90deg)">10</div>
<div class="t" style="left:29px;top:437.54999999999995px;width:10px;text-align:center;font-size:7px;color:#333;transform-origin:0 0;transform:rotate(-90deg)">9</div>
<div class="t" style="left:29px;top:521.6px;width:10px;text-align:center;font-size:7px;color:#333;transform-origin:0 0;transform:rotate(-90deg)">8</div>
<div class="a" style="left:28px;top:292px;width:15px;height:1px;background:#f0a050"></div>
<div class="a" style="left:534.3px;top:121px;width:1px;height:15px;background:#eeb088"></div>
<svg style="left:0;top:0" width="900" height="595"><rect x="43" y="136" width="521" height="397" fill="#8bba64"/><path d="M60 142 H107" stroke="#95b656" stroke-width="4.5" stroke-linecap="round"/><path d="M62.5 142 V160 M104.5 142 V160" stroke="#95b656" stroke-width="2"/><rect x="58.5" y="159" width="6" height="43" rx="3" fill="#95b656"/><rect x="102.7" y="159" width="6" height="43" rx="3" fill="#95b656"/><path d="M83.7 155 V181" stroke="#95b656" stroke-width="4" stroke-dasharray="1.2 1.2"/><rect x="58.5" y="299" width="6" height="42" rx="3" fill="#95b656"/><rect x="102.7" y="299" width="6" height="42" rx="3" fill="#95b656"/><path d="M62 340 V356 Q62 367 70 367 H98 Q106 367 106 356 V340" stroke="#95b656" stroke-width="3" fill="none"/><path d="M60 360 H107" stroke="#95b656" stroke-width="3"/><path d="M83.7 320 V346" stroke="#95b656" stroke-width="4" stroke-dasharray="1.2 1.2"/><path d="M43 204.1 H176 M43 215.2 H167 L178 204.5 M167.1 215.2 V283.5 M178.2 208 V291.8 M43 294.8 H176 M167.1 283.5 L176 291.8" stroke="#76a254" stroke-width="0.7" fill="none"/><rect x="175.2" y="201" width="3" height="7" fill="none" stroke="#76a254" stroke-width="0.7"/><rect x="175.2" y="291.8" width="3" height="8" fill="none" stroke="#76a254" stroke-width="0.7"/><path d="M502 136 V533 M511 136 V533" stroke="#83b25c" stroke-width="0.8"/><path d="M43 407.3 H100" stroke="#7eaa58" stroke-width="0.7"/><rect x="155.6" y="504.4" width="51" height="29" fill="none" stroke="#a2b84e" stroke-width="0.9"/><path d="M155.6 511 H206.6 M155.6 518 H206.6 M155.6 525 H206.6 M166 504.4 V533 M176 504.4 V533 M186 504.4 V533" stroke="#a2b84e" stroke-width="0.6"/><rect x="192" y="505" width="14" height="28" fill="#a2b84e" opacity="0.5"/><path d="M49.6 136 V533" stroke="#4a6690" stroke-width="1"/><path d="M66.4 136 V533 M83.5 136 V533" stroke="#b862b0" stroke-width="1"/><path d="M134.0 136 V274.6 H564" stroke="#7e5a2c" stroke-width="1.15" fill="none"/><path d="M150.8 136 V257.7 H564" stroke="#7e5a2c" stroke-width="1.15" fill="none"/><path d="M167.7 136 V240.9 H564" stroke="#7e5a2c" stroke-width="1.15" fill="none"/><path d="M184.6 136 V224.2 H564" stroke="#7e5a2c" stroke-width="1.15" fill="none"/><path d="M201.4 136 V207.2 H564" stroke="#7e5a2c" stroke-width="1.15" fill="none"/><path d="M218.2 136 V190.5 H564" stroke="#7e5a2c" stroke-width="1.15" fill="none"/><path d="M564 140.2 H234.9 V156.6 H564" stroke="#7e5a2c" stroke-width="1.15" fill="none"/><path d="M100.3 136 V474.4 H564 M117.1 136 V457.3 H564" stroke="#3e5fa3" stroke-width="1" fill="none"/><path d="M564 291.6 H134.0 V441.0 H564" stroke="#3e5fa3" stroke-width="1" fill="none"/><path d="M564 308.5 H150.8 V423.3 H564" stroke="#3e5fa3" stroke-width="1" fill="none"/><path d="M564 325.3 H167.7 V407.0 H564" stroke="#3e5fa3" stroke-width="1" fill="none"/><path d="M564 342.0 H184.6 V390.0 H564" stroke="#3e5fa3" stroke-width="1" fill="none"/><path d="M564 358.6 H201.6 V375.6 H564" stroke="#3e5fa3" stroke-width="1" fill="none"/><path d="M43 283.1 H564 M43 482.9 H564" stroke="#4f9a3a" stroke-width="1.6"/><path d="M564 491.4 H100.3 V533" stroke="#b058ae" stroke-width="1" fill="none"/><path d="M564 508.2 H117.1 V533" stroke="#b058ae" stroke-width="1" fill="none"/><path d="M564 525.0 H134.0 V533" stroke="#b058ae" stroke-width="1" fill="none"/><circle cx="100.3" cy="283.1" r="2" fill="#1a3ad0"/><circle cx="117.1" cy="283.1" r="2" fill="#1a3ad0"/><circle cx="66.4" cy="482.9" r="1.8" fill="#d020c8"/><circle cx="83.5" cy="482.9" r="1.8" fill="#d020c8"/><path d="M66.4 139.5 L68.3 142.3 L64.5 142.3 Z M83.5 137.5 L85.4 140.3 L81.6 140.3 Z" fill="#d020c8"/><path d="M47.8 230.5 H51.4 L49.6 233.5 Z" fill="#1a2a80"/></svg>
<div class="a" style="left:333.5px;top:152px;width:46px;height:37px;background:#f9f9f9;border-radius:4px;box-shadow:0 0 0.8px 0.8px #e8efe4"></div>
<div class="t" style="left:333.5px;width:46px;text-align:center;top:153.5px;font-size:7.2px;color:#b4b4b4;font-family:'Liberation Serif',serif;font-style:italic;-webkit-text-stroke:0">106-1-3</div>
<div class="t" style="left:333.5px;width:46px;text-align:center;top:160.7px;font-size:6px;color:#b4b4b4;font-family:'Liberation Serif',serif;font-style:italic;-webkit-text-stroke:0">面积=22.6 m²</div>
<div class="t" style="left:333.5px;width:46px;text-align:center;top:167.9px;font-size:6px;color:#b4b4b4;font-family:'Liberation Serif',serif;font-style:italic;-webkit-text-stroke:0">管间距=200 mm</div>
<div class="t" style="left:333.5px;width:46px;text-align:center;top:175.1px;font-size:6px;color:#b4b4b4;font-family:'Liberation Serif',serif;font-style:italic;-webkit-text-stroke:0">管长度=107.3 m</div>
<div class="t" style="left:333.5px;width:46px;text-align:center;top:182.3px;font-size:6px;color:#b4b4b4;font-family:'Liberation Serif',serif;font-style:italic;-webkit-text-stroke:0">热输出=1178 W</div>
<div class="a" style="left:333.7px;top:361.6px;width:45.7px;height:37px;background:#f9f9f9;border-radius:4px;box-shadow:0 0 0.8px 0.8px #e8efe4"></div>
<div class="t" style="left:333.7px;width:45.7px;text-align:center;top:363.1px;font-size:7.2px;color:#b4b4b4;font-family:'Liberation Serif',serif;font-style:italic;-webkit-text-stroke:0">106-1-4</div>
<div class="t" style="left:333.7px;width:45.7px;text-align:center;top:370.3px;font-size:6px;color:#b4b4b4;font-family:'Liberation Serif',serif;font-style:italic;-webkit-text-stroke:0">面积=20.6 m²</div>
<div class="t" style="left:333.7px;width:45.7px;text-align:center;top:377.5px;font-size:6px;color:#b4b4b4;font-family:'Liberation Serif',serif;font-style:italic;-webkit-text-stroke:0">管间距=200 mm</div>
<div class="t" style="left:333.7px;width:45.7px;text-align:center;top:384.70000000000005px;font-size:6px;color:#b4b4b4;font-family:'Liberation Serif',serif;font-style:italic;-webkit-text-stroke:0">管长度=103.4 m</div>
<div class="t" style="left:333.7px;width:45.7px;text-align:center;top:391.90000000000003px;font-size:6px;color:#b4b4b4;font-family:'Liberation Serif',serif;font-style:italic;-webkit-text-stroke:0">热输出=1259 W</div>
<div class="a" style="left:330.7px;top:265.2px;width:46.2px;height:27.6px;background:#f9f9f9;border:1.2px solid #2e9090;border-radius:3.5px"></div>
<div class="t" style="left:330.7px;width:46.2px;text-align:center;top:266.8px;font-size:10.2px;color:#2e8a8a;font-family:'Liberation Serif',serif;-webkit-text-stroke:0">106-1</div>
<div class="t" style="left:330.7px;width:46.2px;text-align:center;top:277.5px;font-size:5.6px;color:#c0c0c0;font-family:'Liberation Serif',serif;-webkit-text-stroke:0">DIN - 0.100</div>
<div class="t" style="left:330.7px;width:46.2px;text-align:center;top:284.5px;font-size:6px;color:#c0c0c0;font-family:'Liberation Serif',serif;-webkit-text-stroke:0">热输出=8611 W</div>
<svg style="left:371px;top:275px" width="9" height="9" viewBox="0 0 9 9"><circle cx="4.5" cy="4.5" r="3.6" fill="#6aa8e0" stroke="#334" stroke-width="1"/><circle cx="4.5" cy="4.5" r="1.3" fill="#eef"/></svg>
<div class="a" style="left:27.5px;top:533px;width:536.5px;height:13px;background:#f0f0f0"></div>
<svg style="left:30px;top:534.8px" width="19" height="10" viewBox="0 0 19 10"><path d="M4 0.6 L7.4 4.4 H5.6 V9.4 H2.4 V4.4 H0.6 Z" fill="#9cd0f4" stroke="#2a78d0" stroke-width="0.9" stroke-linejoin="round"/><path d="M15 9.4 L18.4 5.6 H16.6 V0.6 H13.4 V5.6 H11.6 Z" fill="#5a9ee8" stroke="#1a5ac0" stroke-width="0.9" stroke-linejoin="round"/></svg>
<div class="a" style="left:39.5px;top:534px;width:1px;height:11px;background:#dcdcdc"></div>
<div class="a" style="left:50px;top:534px;width:1px;height:11px;background:#dcdcdc"></div>
<svg style="left:68.5px;top:535px" width="10" height="9" viewBox="0 0 10 9"><rect x="0.5" y="0.5" width="9" height="8" fill="#f4f4f4" stroke="#999" stroke-width="0.6"/><path d="M2 3 H8 M2 5 H8 M5 6 L8 8" stroke="#777" stroke-width="0.6"/></svg>
<div class="t" style="left:82px;top:536px;font-size:7.8px;color:#444;">1 层</div>
<svg style="left:117px;top:538px" width="6" height="4" viewBox="0 0 6 4"><path d="M0.6 0.6 L3 3 L5.4 0.6" stroke="#444" fill="none" stroke-width="0.9"/></svg>
<div class="a" style="left:125px;top:534px;width:27px;height:11.5px;background:#fafafa"></div>
<svg style="left:149px;top:534px" width="5" height="12" viewBox="0 0 5 12"><path d="M0.5 11.5 L4.5 0.5" stroke="#cfcfcf" stroke-width="0.8"/></svg>
<svg style="left:128px;top:536px" width="5" height="8" viewBox="0 0 5 8"><circle cx="2.5" cy="2.7" r="2.3" fill="#f6b820"/><rect x="1.6" y="5" width="1.8" height="2.5" fill="#999"/></svg>
<div class="t" style="left:134px;top:536.5px;font-size:7.2px;color:#333;">底图</div>
<div class="a" style="left:152px;top:534px;width:29px;height:11.5px;background:#fafafa"></div>
<svg style="left:178px;top:534px" width="5" height="12" viewBox="0 0 5 12"><path d="M0.5 11.5 L4.5 0.5" stroke="#cfcfcf" stroke-width="0.8"/></svg>
<svg style="left:155px;top:536px" width="5" height="8" viewBox="0 0 5 8"><circle cx="2.5" cy="2.7" r="2.3" fill="#f6b820"/><rect x="1.6" y="5" width="1.8" height="2.5" fill="#999"/></svg>
<div class="t" style="left:161px;top:536.5px;font-size:7.2px;color:#333;">建筑</div>
<div class="a" style="left:181px;top:534px;width:37px;height:11.5px;background:#fafafa"></div>
<svg style="left:215px;top:534px" width="5" height="12" viewBox="0 0 5 12"><path d="M0.5 11.5 L4.5 0.5" stroke="#cfcfcf" stroke-width="0.8"/></svg>
<svg style="left:183px;top:536.2px" width="8" height="8" viewBox="0 0 8 8"><path d="M1.2 1.2 L6.8 6.8 M6.8 1.2 L1.2 6.8" stroke="#e03838" stroke-width="1.9" stroke-linecap="round"/></svg>
<div class="t" style="left:192px;top:536.5px;font-size:7.2px;color:#333;">冷/热...</div>
<div class="a" style="left:218px;top:534px;width:39px;height:11.5px;background:#fafafa"></div>
<svg style="left:254px;top:534px" width="5" height="12" viewBox="0 0 5 12"><path d="M0.5 11.5 L4.5 0.5" stroke="#cfcfcf" stroke-width="0.8"/></svg>
<svg style="left:220px;top:536.2px" width="8" height="8" viewBox="0 0 8 8"><path d="M1.2 1.2 L6.8 6.8 M6.8 1.2 L1.2 6.8" stroke="#e03838" stroke-width="1.9" stroke-linecap="round"/></svg>
<div class="t" style="left:229px;top:536.5px;font-size:7.2px;color:#333;">冷/热...</div>
<div class="a" style="left:257px;top:534px;width:29px;height:11.5px;background:#fafafa"></div>
<svg style="left:283px;top:534px" width="5" height="12" viewBox="0 0 5 12"><path d="M0.5 11.5 L4.5 0.5" stroke="#cfcfcf" stroke-width="0.8"/></svg>
<svg style="left:260px;top:536px" width="5" height="8" viewBox="0 0 5 8"><circle cx="2.5" cy="2.7" r="2.3" fill="#f6b820"/><rect x="1.6" y="5" width="1.8" height="2.5" fill="#999"/></svg>
<div class="t" style="left:266px;top:536.5px;font-size:7.2px;color:#333;">对流</div>
<div class="a" style="left:286px;top:534px;width:38px;height:11.5px;background:#e8efe4"></div>
<svg style="left:321px;top:534px" width="5" height="12" viewBox="0 0 5 12"><path d="M0.5 11.5 L4.5 0.5" stroke="#cfcfcf" stroke-width="0.8"/></svg>
<svg style="left:289px;top:536px" width="5" height="8" viewBox="0 0 5 8"><circle cx="2.5" cy="2.7" r="2.3" fill="#f6b820"/><rect x="1.6" y="5" width="1.8" height="2.5" fill="#999"/></svg>
<div class="t" style="left:295px;top:536.5px;font-size:7.2px;color:#333;font-weight:bold;">地面/...</div>
<div class="a" style="left:324px;top:534px;width:41px;height:11.5px;background:#fafafa"></div>
<svg style="left:362px;top:534px" width="5" height="12" viewBox="0 0 5 12"><path d="M0.5 11.5 L4.5 0.5" stroke="#cfcfcf" stroke-width="0.8"/></svg>
<svg style="left:327px;top:536px" width="5" height="8" viewBox="0 0 5 8"><circle cx="2.5" cy="2.7" r="2.3" fill="#f6b820"/><rect x="1.6" y="5" width="1.8" height="2.5" fill="#999"/></svg>
<div class="t" style="left:333px;top:536.5px;font-size:7.2px;color:#333;">绘制盘...</div>
<div class="a" style="left:365px;top:534px;width:43px;height:11.5px;background:#fafafa"></div>
<svg style="left:405px;top:534px" width="5" height="12" viewBox="0 0 5 12"><path d="M0.5 11.5 L4.5 0.5" stroke="#cfcfcf" stroke-width="0.8"/></svg>
<svg style="left:368px;top:536px" width="5" height="8" viewBox="0 0 5 8"><circle cx="2.5" cy="2.7" r="2.3" fill="#f6b820"/><rect x="1.6" y="5" width="1.8" height="2.5" fill="#999"/></svg>
<div class="t" style="left:374px;top:536.5px;font-size:7.2px;color:#333;">天花板...</div>
<div class="a" style="left:408px;top:534px;width:43px;height:11.5px;background:#fafafa"></div>
<svg style="left:448px;top:534px" width="5" height="12" viewBox="0 0 5 12"><path d="M0.5 11.5 L4.5 0.5" stroke="#cfcfcf" stroke-width="0.8"/></svg>
<svg style="left:410px;top:536.2px" width="8" height="8" viewBox="0 0 8 8"><path d="M1.2 1.2 L6.8 6.8 M6.8 1.2 L1.2 6.8" stroke="#e03838" stroke-width="1.9" stroke-linecap="round"/></svg>
<div class="t" style="left:419px;top:536.5px;font-size:7.2px;color:#333;">绘制盘...</div>
<div class="a" style="left:451px;top:534px;width:41px;height:11.5px;background:#fafafa"></div>
<svg style="left:489px;top:534px" width="5" height="12" viewBox="0 0 5 12"><path d="M0.5 11.5 L4.5 0.5" stroke="#cfcfcf" stroke-width="0.8"/></svg>
<svg style="left:453px;top:536.2px" width="8" height="8" viewBox="0 0 8 8"><path d="M1.2 1.2 L6.8 6.8 M6.8 1.2 L1.2 6.8" stroke="#e03838" stroke-width="1.9" stroke-linecap="round"/></svg>
<div class="t" style="left:462px;top:536.5px;font-size:7.2px;color:#333;">干式系统</div>
<div class="a" style="left:492px;top:534px;width:33px;height:11.5px;background:#fafafa"></div>
<svg style="left:522px;top:534px" width="5" height="12" viewBox="0 0 5 12"><path d="M0.5 11.5 L4.5 0.5" stroke="#cfcfcf" stroke-width="0.8"/></svg>
<svg style="left:495px;top:536px" width="5" height="8" viewBox="0 0 5 8"><circle cx="2.5" cy="2.7" r="2.3" fill="#f6b820"/><rect x="1.6" y="5" width="1.8" height="2.5" fill="#999"/></svg>
<div class="t" style="left:501px;top:536.5px;font-size:7.2px;color:#333;">打印</div>
<svg style="left:545px;top:538.5px" width="6" height="4" viewBox="0 0 6 4"><path d="M0.6 0.6 L3 3 L5.4 0.6" stroke="#444" fill="none" stroke-width="0.9"/></svg>
<svg style="left:553px;top:534.5px" width="10" height="10" viewBox="0 0 10 10"><rect x="0.5" y="0.5" width="8" height="7" fill="#d8ecfa" stroke="#4a9ae0" stroke-width="0.8"/><path d="M6 6 L9 9.5" stroke="#e8a060" stroke-width="1.5"/></svg>
<div class="a" style="left:27.5px;top:546px;width:536.5px;height:14.5px;background:#0b78d4"></div>
<svg style="left:33px;top:548.5px" width="10" height="9" viewBox="0 0 10 9"><path d="M5 0.5 L9.7 8.7 H0.3 Z" fill="#fbd84a" stroke="#e0b020" stroke-width="0.5"/><path d="M5 3.2 V6" stroke="#222" stroke-width="1"/><circle cx="5" cy="7.4" r="0.55" fill="#222"/></svg>
<div class="t" style="left:55px;top:549.8px;font-size:7.6px;color:#e9f2fb;">37.194; 10.663; 136.002</div>
<div class="t" style="left:433.5px;top:549.5px;font-size:7.2px;color:#6aaae8;">定向线 | 上锁 | 栅格 | </div>
<div class="t" style="left:504.5px;top:549.5px;font-size:7.2px;color:#ffffff;font-weight:bold">自动</div>
<div class="t" style="left:523.5px;top:549.5px;font-size:7.2px;color:#6aaae8;">| 重复</div>
<svg style="left:549.5px;top:551.5px" width="7" height="4" viewBox="0 0 7 4"><path d="M0.6 0.6 L3.5 3.2 L6.4 0.6" stroke="#eaf3ff" fill="none" stroke-width="1"/></svg>
<div class="a" style="left:27.5px;top:564.8px;width:861px;height:15.5px;background:#f1f1f1;border:1px solid #e3e3e3;border-radius:2px"></div>
<svg style="left:31.5px;top:568px" width="9" height="10" viewBox="0 0 9 10"><path d="M0.5 0.5 H5.5 L7 2 V9.5 H0.5 Z" fill="#fafafa" stroke="#666" stroke-width="0.8"/><circle cx="6.3" cy="7.6" r="2.2" fill="#e02828"/><path d="M5.5 6.8 L7.1 8.4 M7.1 6.8 L5.5 8.4" stroke="#fff" stroke-width="0.6"/></svg>
<div class="t" style="left:42.5px;top:569px;font-size:7.3px;color:#333;">诊断</div>
<div class="a" style="left:61px;top:571px;width:791px;height:3px;background:repeating-linear-gradient(90deg,#dadada 0 1px,transparent 1px 2px)"></div>
<svg style="left:855px;top:570.5px" width="6" height="4" viewBox="0 0 6 4"><path d="M0.6 0.6 L3 3 L5.4 0.6" stroke="#666" fill="none" stroke-width="0.9"/></svg>
<svg style="left:866px;top:568.5px" width="5" height="8" viewBox="0 0 5 8"><path d="M1 0.5 H4 V4 H1 Z M0 4.5 H5 M2.5 4.5 V8" stroke="#666" fill="none" stroke-width="0.8"/></svg>
<svg style="left:876px;top:569px" width="7" height="7" viewBox="0 0 7 7"><path d="M0.5 0.5 L6.5 6.5 M6.5 0.5 L0.5 6.5" stroke="#666" stroke-width="0.9"/></svg>
<div class="a" style="left:27.5px;top:580.5px;width:861px;height:2.5px;background:#e6e6e6"></div>
<div class="a" style="left:28px;top:580.8px;width:16px;height:1.8px;background:#fafafa"></div>
<div class="a" style="left:45px;top:580.8px;width:52px;height:1.8px;background:#d8d8d8"></div>
<div class="a" style="left:97px;top:580.8px;width:120px;height:1.8px;background:#f6f6f6"></div>
<div class="a" style="left:564px;top:103px;width:324px;height:458px;background:#f0f0f0"></div>
<div class="a" style="left:568px;top:107px;width:319px;height:14.3px;background:#0b78d4"></div>
<svg style="left:571px;top:108px" width="9" height="12" viewBox="0 0 9 12"><rect x="0.5" y="1" width="6" height="10" fill="#f4f4f4" stroke="#bbb" stroke-width="0.5"/><rect x="4" y="1" width="2" height="10" fill="#e05050"/><path d="M3 10 L8.5 3" stroke="#f0b020" stroke-width="1.4"/></svg>
<div class="t" style="left:583px;top:110px;font-size:7.6px;color:#ffffff;">● 参数表</div>
<div class="a" style="left:624px;top:111.5px;width:226px;height:5px;background:radial-gradient(circle,rgba(255,255,255,0.08) 0.6px,transparent 0.9px) 0 0/2px 2px"></div>
<svg style="left:856.5px;top:112px" width="6" height="4" viewBox="0 0 6 4"><path d="M0.6 0.6 L3 3 L5.4 0.6" stroke="#fff" fill="none" stroke-width="0.9"/></svg>
<svg style="left:867px;top:110px" width="5" height="8" viewBox="0 0 5 8"><path d="M1 0.5 H4 V4 H1 Z M0 4.5 H5 M2.5 4.5 V8" stroke="#fff" fill="none" stroke-width="0.8"/></svg>
<svg style="left:877px;top:110.5px" width="7" height="7" viewBox="0 0 7 7"><path d="M0.5 0.5 L6.5 6.5 M6.5 0.5 L0.5 6.5" stroke="#fff" stroke-width="1"/></svg>
<div class="a" style="left:568px;top:121.3px;width:319px;height:19px;background:#ebebeb"></div>
<svg style="left:571px;top:129.5px" width="6" height="4" viewBox="0 0 6 4"><path d="M0.6 0.6 L3 3 L5.4 0.6" stroke="#333" fill="none" stroke-width="1"/></svg>
<div class="t" style="left:573.8px;width:319px;text-align:center;top:124.8px;font-size:7.1px;color:#333">1* 地面供热/供冷区</div>
<div class="a" style="left:568px;top:140px;width:319px;height:0.8px;background:#d6d6d6"></div>
<div class="a" style="left:568px;top:140.8px;width:309px;height:372.7px;overflow:hidden">
<div class="a" style="left:0;top:-0.30000000000001137px;width:9px;height:13.699999999999989px;background:#ebebeb"></div>
<div class="a" style="left:9px;top:-0.30000000000001137px;width:145.29999999999995px;height:13.699999999999989px;background:#ffffff"></div>
<div class="a" style="left:154.29999999999995px;top:-0.30000000000001137px;width:154.20000000000005px;height:13.699999999999989px;background:#ffffff"></div>
<div class="a" style="left:9px;top:12.499999999999977px;width:299.5px;height:0.9px;background:rgba(0,0,0,0.055)"></div>
<div class="t" style="left:11px;top:4.699999999999989px;font-size:7.1px;color:#333">自动分割供热区</div>
<div class="a" style="left:0;top:13.399999999999977px;width:309px;height:12.800000000000011px;background:#ebebeb"></div>
<svg style="left:3px;top:18.299999999999983px" width="6" height="4" viewBox="0 0 6 4"><path d="M0.6 0.6 L3 3 L5.4 0.6" stroke="#444" fill="none" stroke-width="1"/></svg>
<div class="t" style="left:10px;top:15.599999999999977px;font-size:8.5px;color:#999">尺寸</div>
<div class="a" style="left:0;top:26.19999999999999px;width:9px;height:14.599999999999994px;background:#ebebeb"></div>
<div class="a" style="left:9px;top:26.19999999999999px;width:145.29999999999995px;height:14.599999999999994px;background:#ffffff"></div>
<div class="a" style="left:154.29999999999995px;top:26.19999999999999px;width:154.20000000000005px;height:14.599999999999994px;background:#e3eefa"></div>
<div class="a" style="left:9px;top:39.899999999999984px;width:299.5px;height:0.9px;background:rgba(0,0,0,0.055)"></div>
<div class="t" style="left:11px;top:31.19999999999999px;font-size:7.1px;color:#333">有效面积</div>
<div class="t" style="left:156.29999999999995px;top:30.69999999999999px;font-size:7.5px;color:#3a4fa8;-webkit-text-stroke:0">141.32</div>
<div class="t" style="left:237.5px;width:60px;text-align:right;top:30.19999999999999px;font-size:7.3px;color:#555">m²</div>
<svg style="left:301.5px;top:29.999999999999986px" width="8" height="7" viewBox="0 0 8 7"><rect x="1" y="0.5" width="6.5" height="4.5" fill="#7cc6f0" stroke="#2a90d8" stroke-width="0.6"/><path d="M0 6.5 H5 M3 5 V6.5" stroke="#2a90d8" stroke-width="0.8"/></svg>
<div class="a" style="left:0;top:40.79999999999998px;width:9px;height:13.900000000000006px;background:#ebebeb"></div>
<div class="a" style="left:9px;top:40.79999999999998px;width:145.29999999999995px;height:13.900000000000006px;background:#ffffff"></div>
<div class="a" style="left:154.29999999999995px;top:40.79999999999998px;width:154.20000000000005px;height:13.900000000000006px;background:#e3eefa"></div>
<div class="a" style="left:9px;top:53.79999999999999px;width:299.5px;height:0.9px;background:rgba(0,0,0,0.055)"></div>
<div class="t" style="left:11px;top:45.79999999999998px;font-size:7.1px;color:#333">料单面积</div>
<div class="t" style="left:156.29999999999995px;top:45.29999999999998px;font-size:7.5px;color:#3a4fa8;-webkit-text-stroke:0">141.32</div>
<div class="t" style="left:237.5px;width:60px;text-align:right;top:44.79999999999998px;font-size:7.3px;color:#555">m²</div>
<svg style="left:301.5px;top:44.249999999999986px" width="8" height="7" viewBox="0 0 8 7"><rect x="1" y="0.5" width="6.5" height="4.5" fill="#7cc6f0" stroke="#2a90d8" stroke-width="0.6"/><path d="M0 6.5 H5 M3 5 V6.5" stroke="#2a90d8" stroke-width="0.8"/></svg>
<div class="a" style="left:0;top:54.69999999999999px;width:9px;height:13.800000000000011px;background:#ebebeb"></div>
<div class="a" style="left:9px;top:54.69999999999999px;width:145.29999999999995px;height:13.800000000000011px;background:#ffffff"></div>
<div class="a" style="left:154.29999999999995px;top:54.69999999999999px;width:154.20000000000005px;height:13.800000000000011px;background:#ffffff"></div>
<div class="a" style="left:9px;top:67.6px;width:299.5px;height:0.9px;background:rgba(0,0,0,0.055)"></div>
<div class="t" style="left:11px;top:59.69999999999999px;font-size:7.1px;color:#333">遮挡面积</div>
<div class="t" style="left:156.29999999999995px;top:59.19999999999999px;font-size:7.5px;color:#222;-webkit-text-stroke:0">0.00</div>
<div class="t" style="left:237.5px;width:60px;text-align:right;top:58.69999999999999px;font-size:7.3px;color:#555">m²</div>
<div class="a" style="left:0;top:68.5px;width:309px;height:12.899999999999977px;background:#ebebeb"></div>
<svg style="left:3px;top:73.44999999999999px" width="6" height="4" viewBox="0 0 6 4"><path d="M0.6 0.6 L3 3 L5.4 0.6" stroke="#444" fill="none" stroke-width="1"/></svg>
<div class="t" style="left:10px;top:70.7px;font-size:8.5px;color:#999">技术参数</div>
<div class="a" style="left:0;top:81.39999999999998px;width:9px;height:14.300000000000011px;background:#ebebeb"></div>
<div class="a" style="left:9px;top:81.39999999999998px;width:145.29999999999995px;height:14.300000000000011px;background:#ffffff"></div>
<div class="a" style="left:154.29999999999995px;top:81.39999999999998px;width:154.20000000000005px;height:14.300000000000011px;background:#d6dee8"></div>
<div class="a" style="left:9px;top:94.79999999999998px;width:299.5px;height:0.9px;background:rgba(0,0,0,0.055)"></div>
<div class="t" style="left:11px;top:86.39999999999998px;font-size:7.1px;color:#999">分/集水器</div>
<div class="t" style="left:156.29999999999995px;top:85.89999999999998px;font-size:7.1px;color:#6a6a80;-webkit-text-stroke:0">No 1.4分集水器</div>
<svg style="left:291px;top:87.04999999999998px" width="6" height="4" viewBox="0 0 6 4"><path d="M0.6 0.6 L3 3 L5.4 0.6" stroke="#333" fill="none" stroke-width="1"/></svg>
<svg style="left:301.5px;top:85.04999999999998px" width="8" height="7" viewBox="0 0 8 7"><rect x="1" y="0.5" width="6.5" height="4.5" fill="#7cc6f0" stroke="#2a90d8" stroke-width="0.6"/><path d="M0 6.5 H5 M3 5 V6.5" stroke="#2a90d8" stroke-width="0.8"/></svg>
<div class="a" style="left:0;top:95.69999999999999px;width:9px;height:14.300000000000011px;background:#ebebeb"></div>
<div class="a" style="left:9px;top:95.69999999999999px;width:145.29999999999995px;height:14.300000000000011px;background:#ffffff"></div>
<div class="a" style="left:154.29999999999995px;top:95.69999999999999px;width:154.20000000000005px;height:14.300000000000011px;background:#ffffff"></div>
<div class="a" style="left:9px;top:109.1px;width:299.5px;height:0.9px;background:rgba(0,0,0,0.055)"></div>
<div class="t" style="left:11px;top:100.69999999999999px;font-size:7.1px;color:#333">供热/供冷区类型</div>
<div class="t" style="left:156.29999999999995px;top:100.19999999999999px;font-size:7.1px;color:#222;-webkit-text-stroke:0">标准</div>
<svg style="left:291px;top:101.35px" width="6" height="4" viewBox="0 0 6 4"><path d="M0.6 0.6 L3 3 L5.4 0.6" stroke="#333" fill="none" stroke-width="1"/></svg>
<div class="a" style="left:0;top:110.0px;width:9px;height:14.300000000000011px;background:#ebebeb"></div>
<div class="a" style="left:9px;top:110.0px;width:145.29999999999995px;height:14.300000000000011px;background:#ffffff"></div>
<div class="a" style="left:154.29999999999995px;top:110.0px;width:154.20000000000005px;height:14.300000000000011px;background:#ffffff"></div>
<div class="a" style="left:9px;top:123.4px;width:299.5px;height:0.9px;background:rgba(0,0,0,0.055)"></div>
<div class="t" style="left:11px;top:115.0px;font-size:7.1px;color:#333">分割标准</div>
<div class="t" style="left:156.29999999999995px;top:114.5px;font-size:7.1px;color:#222;-webkit-text-stroke:0">等压降</div>
<svg style="left:291px;top:115.65px" width="6" height="4" viewBox="0 0 6 4"><path d="M0.6 0.6 L3 3 L5.4 0.6" stroke="#333" fill="none" stroke-width="1"/></svg>
<div class="a" style="left:0;top:124.30000000000001px;width:9px;height:14.299999999999955px;background:#ebebeb"></div>
<div class="a" style="left:9px;top:124.30000000000001px;width:145.29999999999995px;height:14.299999999999955px;background:#ffffff"></div>
<div class="a" style="left:154.29999999999995px;top:124.30000000000001px;width:154.20000000000005px;height:14.299999999999955px;background:#e3eefa"></div>
<div class="a" style="left:9px;top:137.69999999999996px;width:299.5px;height:0.9px;background:rgba(0,0,0,0.055)"></div>
<div class="t" style="left:11px;top:129.3px;font-size:7.1px;color:#333">供热/供冷面的数量</div>
<div class="t" style="left:156.29999999999995px;top:128.8px;font-size:7.5px;color:#3a4fa8;-webkit-text-stroke:0">7</div>
<svg style="left:301.5px;top:127.94999999999999px" width="8" height="7" viewBox="0 0 8 7"><rect x="1" y="0.5" width="6.5" height="4.5" fill="#7cc6f0" stroke="#2a90d8" stroke-width="0.6"/><path d="M0 6.5 H5 M3 5 V6.5" stroke="#2a90d8" stroke-width="0.8"/></svg>
<div class="a" style="left:0;top:138.59999999999997px;width:9px;height:14.300000000000011px;background:#ebebeb"></div>
<div class="a" style="left:9px;top:138.59999999999997px;width:145.29999999999995px;height:14.300000000000011px;background:#ffffff"></div>
<div class="a" style="left:154.29999999999995px;top:138.59999999999997px;width:154.20000000000005px;height:14.300000000000011px;background:#dcdcdc"></div>
<div class="a" style="left:9px;top:151.99999999999997px;width:299.5px;height:0.9px;background:rgba(0,0,0,0.055)"></div>
<div class="t" style="left:11px;top:143.59999999999997px;font-size:7.1px;color:#999">地面构造 ...</div>
<div class="t" style="left:156.29999999999995px;top:143.09999999999997px;font-size:7.5px;color:#777;-webkit-text-stroke:0">1.039 / 80</div>
<svg style="left:291px;top:144.24999999999997px" width="6" height="4" viewBox="0 0 6 4"><path d="M0.6 0.6 L3 3 L5.4 0.6" stroke="#333" fill="none" stroke-width="1"/></svg>
<div class="a" style="left:0;top:152.89999999999998px;width:9px;height:14.300000000000011px;background:#ebebeb"></div>
<div class="a" style="left:9px;top:152.89999999999998px;width:145.29999999999995px;height:14.300000000000011px;background:#ffffff"></div>
<div class="a" style="left:154.29999999999995px;top:152.89999999999998px;width:154.20000000000005px;height:14.300000000000011px;background:#e3eefa"></div>
<div class="a" style="left:9px;top:166.29999999999998px;width:299.5px;height:0.9px;background:rgba(0,0,0,0.055)"></div>
<div class="t" style="left:11px;top:157.89999999999998px;font-size:7.1px;color:#333">装饰层</div>
<div class="t" style="left:156.29999999999995px;top:157.39999999999998px;font-size:7.5px;color:#3a4fa8;-webkit-text-stroke:0">DIN - 0.100</div>
<svg style="left:291px;top:158.54999999999998px" width="6" height="4" viewBox="0 0 6 4"><path d="M0.6 0.6 L3 3 L5.4 0.6" stroke="#333" fill="none" stroke-width="1"/></svg>
<svg style="left:301.5px;top:156.54999999999998px" width="8" height="7" viewBox="0 0 8 7"><rect x="1" y="0.5" width="6.5" height="4.5" fill="#7cc6f0" stroke="#2a90d8" stroke-width="0.6"/><path d="M0 6.5 H5 M3 5 V6.5" stroke="#2a90d8" stroke-width="0.8"/></svg>
<div class="a" style="left:0;top:167.2px;width:9px;height:14.300000000000011px;background:#ebebeb"></div>
<div class="a" style="left:9px;top:167.2px;width:145.29999999999995px;height:14.300000000000011px;background:#ffffff"></div>
<div class="a" style="left:154.29999999999995px;top:167.2px;width:154.20000000000005px;height:14.300000000000011px;background:#dcdcdc"></div>
<div class="a" style="left:9px;top:180.6px;width:299.5px;height:0.9px;background:rgba(0,0,0,0.055)"></div>
<div class="t" style="left:11px;top:172.2px;font-size:7.1px;color:#999">R<sub style="font-size:5px">λ,B</sub></div>
<div class="t" style="left:156.29999999999995px;top:171.7px;font-size:7.5px;color:#777;-webkit-text-stroke:0">0.100</div>
<div class="t" style="left:237.5px;width:60px;text-align:right;top:171.2px;font-size:7.3px;color:#555">(m²·K)/W</div>
<svg style="left:301.5px;top:170.85px" width="8" height="7" viewBox="0 0 8 7"><rect x="1" y="0.5" width="6.5" height="4.5" fill="#7cc6f0" stroke="#2a90d8" stroke-width="0.6"/><path d="M0 6.5 H5 M3 5 V6.5" stroke="#2a90d8" stroke-width="0.8"/></svg>
<div class="a" style="left:0;top:181.5px;width:9px;height:14.300000000000011px;background:#ebebeb"></div>
<div class="a" style="left:9px;top:181.5px;width:145.29999999999995px;height:14.300000000000011px;background:#ffffff"></div>
<div class="a" style="left:154.29999999999995px;top:181.5px;width:154.20000000000005px;height:14.300000000000011px;background:#e3eefa"></div>
<div class="a" style="left:9px;top:194.9px;width:299.5px;height:0.9px;background:rgba(0,0,0,0.055)"></div>
<div class="t" style="left:11px;top:186.5px;font-size:7.1px;color:#333">Δp最大</div>
<div class="t" style="left:156.29999999999995px;top:186.0px;font-size:7.5px;color:#3a4fa8;-webkit-text-stroke:0">25.000</div>
<div class="t" style="left:237.5px;width:60px;text-align:right;top:185.5px;font-size:7.3px;color:#555">kPa</div>
<svg style="left:301.5px;top:185.15px" width="8" height="7" viewBox="0 0 8 7"><rect x="1" y="0.5" width="6.5" height="4.5" fill="#7cc6f0" stroke="#2a90d8" stroke-width="0.6"/><path d="M0 6.5 H5 M3 5 V6.5" stroke="#2a90d8" stroke-width="0.8"/></svg>
<div class="a" style="left:0;top:195.8px;width:9px;height:14.299999999999955px;background:#ebebeb"></div>
<div class="a" style="left:9px;top:195.8px;width:145.29999999999995px;height:14.299999999999955px;background:#ffffff"></div>
<div class="a" style="left:154.29999999999995px;top:195.8px;width:154.20000000000005px;height:14.299999999999955px;background:#e3eefa"></div>
<div class="a" style="left:9px;top:209.19999999999996px;width:299.5px;height:0.9px;background:rgba(0,0,0,0.055)"></div>
<div class="t" style="left:11px;top:200.8px;font-size:7.1px;color:#333">回填层</div>
<div class="t" style="left:156.29999999999995px;top:200.3px;font-size:7.1px;color:#3a4fa8;-webkit-text-stroke:0">水泥回填层</div>
<svg style="left:291px;top:201.45px" width="6" height="4" viewBox="0 0 6 4"><path d="M0.6 0.6 L3 3 L5.4 0.6" stroke="#333" fill="none" stroke-width="1"/></svg>
<svg style="left:301.5px;top:199.45px" width="8" height="7" viewBox="0 0 8 7"><rect x="1" y="0.5" width="6.5" height="4.5" fill="#7cc6f0" stroke="#2a90d8" stroke-width="0.6"/><path d="M0 6.5 H5 M3 5 V6.5" stroke="#2a90d8" stroke-width="0.8"/></svg>
<div class="a" style="left:0;top:210.09999999999997px;width:9px;height:14.300000000000011px;background:#ebebeb"></div>
<div class="a" style="left:9px;top:210.09999999999997px;width:145.29999999999995px;height:14.300000000000011px;background:#ffffff"></div>
<div class="a" style="left:154.29999999999995px;top:210.09999999999997px;width:154.20000000000005px;height:14.300000000000011px;background:#ffffff"></div>
<div class="a" style="left:9px;top:223.49999999999997px;width:299.5px;height:0.9px;background:rgba(0,0,0,0.055)"></div>
<div class="t" style="left:11px;top:215.09999999999997px;font-size:7.1px;color:#333">λ 砂浆</div>
<div class="t" style="left:156.29999999999995px;top:214.59999999999997px;font-size:7.5px;color:#222;-webkit-text-stroke:0">1.200</div>
<div class="a" style="left:0;top:224.39999999999998px;width:9px;height:14.300000000000011px;background:#ebebeb"></div>
<div class="a" style="left:9px;top:224.39999999999998px;width:145.29999999999995px;height:14.300000000000011px;background:#ffffff"></div>
<div class="a" style="left:154.29999999999995px;top:224.39999999999998px;width:154.20000000000005px;height:14.300000000000011px;background:#ffffff"></div>
<div class="a" style="left:9px;top:237.79999999999998px;width:299.5px;height:0.9px;background:rgba(0,0,0,0.055)"></div>
<div class="t" style="left:11px;top:229.39999999999998px;font-size:7.1px;color:#333">外区</div>
<div class="t" style="left:156.29999999999995px;top:228.89999999999998px;font-size:7.1px;color:#222;-webkit-text-stroke:0">无外区</div>
<svg style="left:291px;top:230.04999999999998px" width="6" height="4" viewBox="0 0 6 4"><path d="M0.6 0.6 L3 3 L5.4 0.6" stroke="#333" fill="none" stroke-width="1"/></svg>
<div class="a" style="left:0;top:238.7px;width:9px;height:14.300000000000011px;background:#ebebeb"></div>
<div class="a" style="left:9px;top:238.7px;width:145.29999999999995px;height:14.300000000000011px;background:#ffffff"></div>
<div class="a" style="left:154.29999999999995px;top:238.7px;width:154.20000000000005px;height:14.300000000000011px;background:#e3eefa"></div>
<div class="a" style="left:9px;top:252.1px;width:299.5px;height:0.9px;background:rgba(0,0,0,0.055)"></div>
<div class="t" style="left:11px;top:243.7px;font-size:7.1px;color:#333">铺管方式</div>
<div class="t" style="left:156.29999999999995px;top:243.2px;font-size:7.1px;color:#3a4fa8;-webkit-text-stroke:0">回形</div>
<svg style="left:291px;top:244.35px" width="6" height="4" viewBox="0 0 6 4"><path d="M0.6 0.6 L3 3 L5.4 0.6" stroke="#333" fill="none" stroke-width="1"/></svg>
<svg style="left:301.5px;top:242.35px" width="8" height="7" viewBox="0 0 8 7"><rect x="1" y="0.5" width="6.5" height="4.5" fill="#7cc6f0" stroke="#2a90d8" stroke-width="0.6"/><path d="M0 6.5 H5 M3 5 V6.5" stroke="#2a90d8" stroke-width="0.8"/></svg>
<div class="a" style="left:0;top:253.0px;width:9px;height:14.300000000000011px;background:#ebebeb"></div>
<div class="a" style="left:9px;top:253.0px;width:145.29999999999995px;height:14.300000000000011px;background:#d3e8f8"></div>
<div class="a" style="left:154.29999999999995px;top:253.0px;width:154.20000000000005px;height:14.300000000000011px;background:#e3eefa"></div>
<div class="a" style="left:9px;top:266.40000000000003px;width:299.5px;height:0.9px;background:rgba(0,0,0,0.055)"></div>
<div class="t" style="left:11px;top:258.0px;font-size:7.1px;color:#333">盘管绘制方式</div>
<div class="t" style="left:156.29999999999995px;top:257.5px;font-size:7.1px;color:#3a4fa8;-webkit-text-stroke:0">如果没有标准管间距的空间则布置紧凑</div>
<div class="a" style="left:289.79999999999995px;top:254.0px;width:10px;height:12.300000000000011px;background:#bfe0f8;border:1px solid #7ab8e8"></div>
<svg style="left:291px;top:258.65px" width="6" height="4" viewBox="0 0 6 4"><path d="M0.6 0.6 L3 3 L5.4 0.6" stroke="#333" fill="none" stroke-width="1"/></svg>
<svg style="left:301.5px;top:256.65px" width="8" height="7" viewBox="0 0 8 7"><rect x="1" y="0.5" width="6.5" height="4.5" fill="#7cc6f0" stroke="#2a90d8" stroke-width="0.6"/><path d="M0 6.5 H5 M3 5 V6.5" stroke="#2a90d8" stroke-width="0.8"/></svg>
<div class="a" style="left:0;top:267.3px;width:9px;height:14.299999999999955px;background:#ebebeb"></div>
<div class="a" style="left:9px;top:267.3px;width:145.29999999999995px;height:14.299999999999955px;background:#ffffff"></div>
<div class="a" style="left:154.29999999999995px;top:267.3px;width:154.20000000000005px;height:14.299999999999955px;background:#e3eefa"></div>
<div class="a" style="left:9px;top:280.7px;width:299.5px;height:0.9px;background:rgba(0,0,0,0.055)"></div>
<div class="t" style="left:11px;top:272.3px;font-size:7.1px;color:#333">引线管布置在绝热层中</div>
<svg style="left:301.5px;top:270.95px" width="8" height="7" viewBox="0 0 8 7"><rect x="1" y="0.5" width="6.5" height="4.5" fill="#7cc6f0" stroke="#2a90d8" stroke-width="0.6"/><path d="M0 6.5 H5 M3 5 V6.5" stroke="#2a90d8" stroke-width="0.8"/></svg>
<div class="a" style="left:0;top:281.59999999999997px;width:9px;height:14.300000000000011px;background:#ebebeb"></div>
<div class="a" style="left:9px;top:281.59999999999997px;width:145.29999999999995px;height:14.300000000000011px;background:#ffffff"></div>
<div class="a" style="left:154.29999999999995px;top:281.59999999999997px;width:154.20000000000005px;height:14.300000000000011px;background:#ffffff"></div>
<div class="a" style="left:9px;top:295.0px;width:299.5px;height:0.9px;background:rgba(0,0,0,0.055)"></div>
<div class="t" style="left:11px;top:286.59999999999997px;font-size:7.1px;color:#333">标准基本参数</div>
<div class="a" style="left:0;top:295.9px;width:9px;height:14.300000000000011px;background:#ebebeb"></div>
<div class="a" style="left:9px;top:295.9px;width:145.29999999999995px;height:14.300000000000011px;background:#ffffff"></div>
<div class="a" style="left:154.29999999999995px;top:295.9px;width:154.20000000000005px;height:14.300000000000011px;background:#e3eefa"></div>
<div class="a" style="left:9px;top:309.3px;width:299.5px;height:0.9px;background:rgba(0,0,0,0.055)"></div>
<div class="t" style="left:11px;top:300.9px;font-size:7.1px;color:#333">自动绘制盘管图</div>
<svg style="left:301.5px;top:299.54999999999995px" width="8" height="7" viewBox="0 0 8 7"><rect x="1" y="0.5" width="6.5" height="4.5" fill="#7cc6f0" stroke="#2a90d8" stroke-width="0.6"/><path d="M0 6.5 H5 M3 5 V6.5" stroke="#2a90d8" stroke-width="0.8"/></svg>
<div class="a" style="left:0;top:310.2px;width:9px;height:14.300000000000011px;background:#ebebeb"></div>
<div class="a" style="left:9px;top:310.2px;width:145.29999999999995px;height:14.300000000000011px;background:#ffffff"></div>
<div class="a" style="left:154.29999999999995px;top:310.2px;width:154.20000000000005px;height:14.300000000000011px;background:#e3eefa"></div>
<div class="a" style="left:9px;top:323.6px;width:299.5px;height:0.9px;background:rgba(0,0,0,0.055)"></div>
<div class="t" style="left:11px;top:315.2px;font-size:7.1px;color:#333">应用</div>
<div class="t" style="left:156.29999999999995px;top:314.7px;font-size:7.1px;color:#3a4fa8;-webkit-text-stroke:0">供热</div>
<svg style="left:291px;top:315.85px" width="6" height="4" viewBox="0 0 6 4"><path d="M0.6 0.6 L3 3 L5.4 0.6" stroke="#333" fill="none" stroke-width="1"/></svg>
<svg style="left:301.5px;top:313.85px" width="8" height="7" viewBox="0 0 8 7"><rect x="1" y="0.5" width="6.5" height="4.5" fill="#7cc6f0" stroke="#2a90d8" stroke-width="0.6"/><path d="M0 6.5 H5 M3 5 V6.5" stroke="#2a90d8" stroke-width="0.8"/></svg>
<div class="a" style="left:0;top:324.5px;width:309px;height:12.699999999999989px;background:#ebebeb"></div>
<svg style="left:3px;top:329.35px" width="6" height="4" viewBox="0 0 6 4"><path d="M0.6 0.6 L3 3 L5.4 0.6" stroke="#444" fill="none" stroke-width="1"/></svg>
<div class="t" style="left:10px;top:326.7px;font-size:8.5px;color:#999">供热</div>
<div class="a" style="left:0;top:337.2px;width:9px;height:14.5px;background:#ebebeb"></div>
<div class="a" style="left:9px;top:337.2px;width:145.29999999999995px;height:14.5px;background:#ffffff"></div>
<div class="a" style="left:154.29999999999995px;top:337.2px;width:154.20000000000005px;height:14.5px;background:#d6dee8"></div>
<div class="a" style="left:9px;top:350.8px;width:299.5px;height:0.9px;background:rgba(0,0,0,0.055)"></div>
<div class="t" style="left:11px;top:342.2px;font-size:7.1px;color:#999"><span style="font-size:9px">θ</span><sub style="font-size:5px">i,供热</sub></div>
<div class="t" style="left:156.29999999999995px;top:341.7px;font-size:7.5px;color:#6a6a80;-webkit-text-stroke:0">20.0</div>
<div class="t" style="left:237.5px;width:60px;text-align:right;top:341.2px;font-size:7.3px;color:#555">°C</div>
<div class="a" style="left:0;top:351.7px;width:9px;height:14.5px;background:#ebebeb"></div>
<div class="a" style="left:9px;top:351.7px;width:145.29999999999995px;height:14.5px;background:#ffffff"></div>
<div class="a" style="left:154.29999999999995px;top:351.7px;width:154.20000000000005px;height:14.5px;background:#e3eefa"></div>
<div class="a" style="left:9px;top:365.3px;width:299.5px;height:0.9px;background:rgba(0,0,0,0.055)"></div>
<div class="t" style="left:11px;top:356.7px;font-size:7.1px;color:#333"><span style="font-size:9px">θ</span><sub style="font-size:5px">同一侧,供热</sub></div>
<div class="t" style="left:156.29999999999995px;top:356.2px;font-size:7.5px;color:#3a4fa8;-webkit-text-stroke:0">20.0</div>
<div class="t" style="left:237.5px;width:60px;text-align:right;top:355.7px;font-size:7.3px;color:#555">°C</div>
<svg style="left:301.5px;top:355.45px" width="8" height="7" viewBox="0 0 8 7"><rect x="1" y="0.5" width="6.5" height="4.5" fill="#7cc6f0" stroke="#2a90d8" stroke-width="0.6"/><path d="M0 6.5 H5 M3 5 V6.5" stroke="#2a90d8" stroke-width="0.8"/></svg>
<div class="a" style="left:0;top:366.2px;width:9px;height:14.299999999999955px;background:#ebebeb"></div>
<div class="a" style="left:9px;top:366.2px;width:145.29999999999995px;height:14.299999999999955px;background:#ffffff"></div>
<div class="a" style="left:154.29999999999995px;top:366.2px;width:154.20000000000005px;height:14.299999999999955px;background:#e3eefa"></div>
<div class="a" style="left:9px;top:379.59999999999997px;width:299.5px;height:0.9px;background:rgba(0,0,0,0.055)"></div>
<div class="t" style="left:11px;top:371.2px;font-size:7.1px;color:#333"><span style="font-size:9px">θ</span></div>
<div class="t" style="left:156.29999999999995px;top:370.7px;font-size:7.1px;color:#3a4fa8;-webkit-text-stroke:0">自动</div>
<div class="t" style="left:237.5px;width:60px;text-align:right;top:370.2px;font-size:7.3px;color:#555">W</div>
</div>
<div class="a" style="left:790px;top:143px;width:9px;height:9px;background:#fff;border:0.8px solid #d0d0d0"></div>
<svg style="left:791px;top:144.5px" width="7" height="6" viewBox="0 0 7 6"><path d="M0.8 3 L2.7 5 L6.2 0.8" stroke="#222" fill="none" stroke-width="1.1"/></svg>
<div class="a" style="left:790px;top:439.5px;width:9px;height:8px;background:#fff;border:0.8px solid #bbb"></div>
<svg style="left:792px;top:442px" width="5" height="3" viewBox="0 0 5 3"><path d="M0 0 H5 L2.5 3 Z" fill="#555"/></svg>
<div class="a" style="left:877px;top:140.8px;width:10px;height:372.7px;background:#f8f8f8"></div>
<svg style="left:878.5px;top:144.5px" width="7" height="4" viewBox="0 0 7 4"><path d="M0.6 3.4 L3.5 0.8 L6.4 3.4" stroke="#555" fill="none" stroke-width="0.9"/></svg>
<div class="a" style="left:881.3px;top:168px;width:2.4px;height:338px;background:#c9c9c9"></div>
<svg style="left:878.5px;top:507px" width="7" height="4" viewBox="0 0 7 4"><path d="M0.6 0.6 L3.5 3.2 L6.4 0.6" stroke="#555" fill="none" stroke-width="0.9"/></svg>
<div class="a" style="left:568px;top:513.5px;width:319px;height:47px;background:#f7f7f7;border-top:1px solid #dcdcdc"></div>
<div class="t" style="left:575.5px;top:521.5px;font-size:7.1px;color:#333;font-weight:bold;-webkit-text-stroke:0">盘管绘制方式</div>
<div class="a" style="left:887px;top:103px;width:1px;height:458px;background:#e2e2e2"></div>
<div class="a" style="left:712.2px;top:408.9px;width:156.7px;height:29.3px;background:#fdfdfd;border:1px solid #c8c8c8;box-shadow:1px 2px 3px rgba(0,0,0,0.25)"></div>
<div class="a" style="left:713.5px;top:410px;width:154px;height:13.3px;background:#cce6fa;border:0.8px dotted #8ab"></div>
<div class="t" style="left:714.5px;top:413px;font-size:7.15px;color:#222;">如果没有标准管间距的空间则布置紧凑</div>
<div class="t" style="left:714.5px;top:427px;font-size:7.15px;color:#222;">如果无法用标准管间距的回路填充，则留出空白</div>
<div class="a" style="left:702px;top:392.2px;width:181.3px;height:52.7px;border:2.8px solid #e3141e;border-radius:12px"></div>
</body></html>
